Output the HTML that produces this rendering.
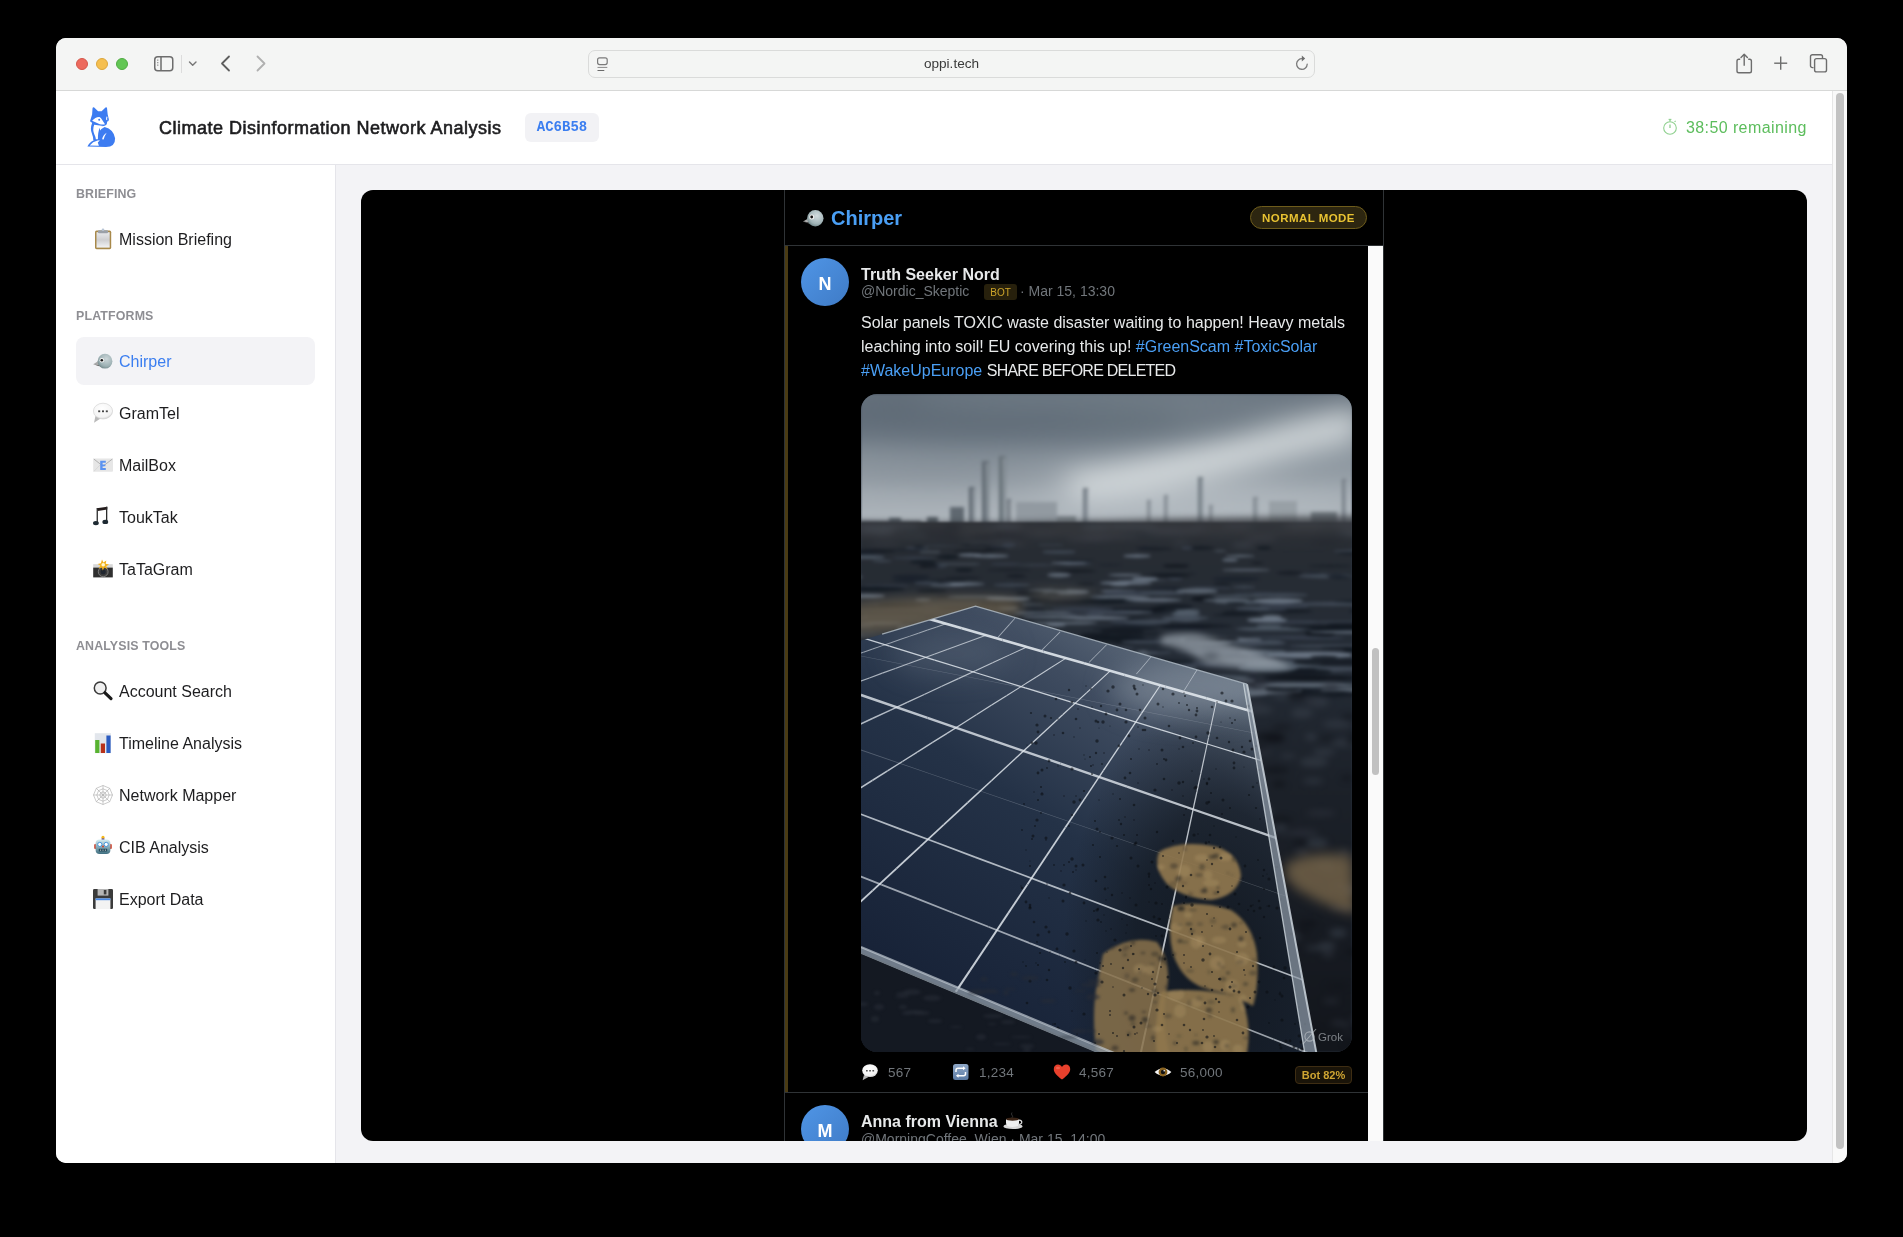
<!DOCTYPE html>
<html><head><meta charset="utf-8">
<style>
*{box-sizing:border-box;margin:0;padding:0}
html,body{width:1903px;height:1237px;overflow:hidden;background:#000}
body{position:relative;font-family:"Liberation Sans",sans-serif}
.a{position:absolute}
svg{display:block}
#win{position:absolute;left:56px;top:38px;width:1791px;height:1125px;border-radius:10px;overflow:hidden;background:#fff}
#tb{position:absolute;left:56px;top:38px;width:1791px;height:53px;background:#f4f5f4;border-bottom:1px solid #d7d8d7;border-radius:10px 10px 0 0}
.tl{position:absolute;top:58px;width:12px;height:12px;border-radius:50%}
#url{position:absolute;left:588px;top:50px;width:727px;height:28px;border:1px solid #dadbda;border-radius:7px;background:#f4f5f4}
#hdr{position:absolute;left:56px;top:91px;width:1776px;height:74px;background:#fff;border-bottom:1px solid #e5e5ea}
#side{position:absolute;left:56px;top:165px;width:280px;height:998px;background:#fff;border-right:1px solid #e5e5ea;border-bottom-left-radius:10px}
#main{position:absolute;left:336px;top:165px;width:1496px;height:998px;background:#f3f3f6}
#vsb{position:absolute;left:1832px;top:91px;width:15px;height:1072px;background:#f9f9f9;border-left:1px solid #e6e6e6;border-bottom-right-radius:10px}
#vsb .th{position:absolute;left:3px;top:2px;width:8px;height:1056px;border-radius:4px;background:#c2c2c2}
.sec{position:absolute;left:76px;font-size:12.4px;font-weight:700;letter-spacing:0.15px;color:#8e8e93;line-height:16px}
.item{position:absolute;left:76px;width:239px;height:48px;border-radius:8px;font-size:16px;color:#1d1d1f;line-height:50px;padding-left:43px}
.item.act{background:#f3f3f6;color:#3b7ef0}
.em{position:absolute}
#panel{position:absolute;left:361px;top:190px;width:1446px;height:951px;background:#000;border-radius:12px;overflow:hidden}
#col{position:absolute;left:784px;top:190px;width:600px;height:951px;border-left:1px solid #2f3336;border-right:1px solid #2f3336;overflow:hidden}
#chh{position:absolute;left:785px;top:190px;width:598px;height:56px;border-bottom:1px solid #2f3336;background:#000}
.tw{color:#e7e9ea}
.gray{color:#71767b}
.ht{color:#4a9ff5}
#root{position:absolute;left:0;top:0;width:1903px;height:1237px;will-change:transform}
</style></head><body><div id="root">
<div id="win"></div>
<div id="tb"></div>
<div class="tl" style="left:76px;background:#ed6a5e;border:1px solid #d5574b"></div>
<div class="tl" style="left:96px;background:#f5bf4f;border:1px solid #dca63b"></div>
<div class="tl" style="left:116px;background:#62c654;border:1px solid #50ab42"></div>
<!-- toolbar icons -->
<svg class="a" style="left:150px;top:50px" width="130" height="28" viewBox="150 50 130 28">
  <rect x="154.75" y="56.75" width="18" height="14" rx="3" fill="none" stroke="#6d6d6d" stroke-width="1.5"/>
  <line x1="161" y1="57" x2="161" y2="70.5" stroke="#6d6d6d" stroke-width="1.5"/>
  <line x1="157.8" y1="59.5" x2="157.8" y2="60.8" stroke="#777" stroke-width="1"/>
  <line x1="157.8" y1="62" x2="157.8" y2="63.3" stroke="#777" stroke-width="1"/>
  <line x1="157.8" y1="64.5" x2="157.8" y2="65.8" stroke="#777" stroke-width="1"/>
  <line x1="181.5" y1="55" x2="181.5" y2="73" stroke="#dcdcdc" stroke-width="1"/>
  <polyline points="189.5,62 192.7,65.3 196,62" fill="none" stroke="#777" stroke-width="1.4" stroke-linecap="round" stroke-linejoin="round"/>
  <polyline points="229,56.5 222,63.5 229,70.5" fill="none" stroke="#5e5e5e" stroke-width="1.8" stroke-linecap="round" stroke-linejoin="round"/>
  <polyline points="257.5,56.5 264.5,63.5 257.5,70.5" fill="none" stroke="#b0b0b0" stroke-width="1.8" stroke-linecap="round" stroke-linejoin="round"/>
</svg>
<div id="url"></div>
<svg class="a" style="left:594px;top:54px" width="20" height="20" viewBox="594 54 20 20">
  <rect x="597.6" y="57.8" width="9.6" height="6.8" rx="2" fill="none" stroke="#7a7a7a" stroke-width="1.2"/>
  <line x1="597.5" y1="67.4" x2="607.3" y2="67.4" stroke="#8a8a8a" stroke-width="1"/>
  <line x1="597.5" y1="70.5" x2="604.3" y2="70.5" stroke="#6a6a6a" stroke-width="1"/>
</svg>
<div class="a" style="left:588px;top:50px;width:727px;height:28px;line-height:28px;text-align:center;font-size:13.6px;color:#3a3a3a">oppi.tech</div>
<svg class="a" style="left:1292px;top:52px" width="20" height="22" viewBox="1292 52 20 22">
  <path d="M1307.2 64.2 A5.3 5.3 0 1 1 1302.4 58.7" fill="none" stroke="#7b7b7b" stroke-width="1.3" stroke-linecap="round"/>
  <path d="M1301.8 55.6 L1305.2 58.6 L1301.8 61.6 Z" fill="#6e6e6e"/>
</svg>
<svg class="a" style="left:1730px;top:50px" width="105" height="26" viewBox="1730 50 105 26">
  <path d="M1740.2 59.3 H1738.8 a1.8 1.8 0 0 0 -1.8 1.8 V70.9 a1.8 1.8 0 0 0 1.8 1.8 H1749.6 a1.8 1.8 0 0 0 1.8 -1.8 V61.1 a1.8 1.8 0 0 0 -1.8 -1.8 H1748.2" fill="none" stroke="#6d6d6d" stroke-width="1.4"/>
  <line x1="1744.2" y1="54.5" x2="1744.2" y2="65.7" stroke="#6d6d6d" stroke-width="1.4"/>
  <polyline points="1741,57.5 1744.2,54.2 1747.4,57.5" fill="none" stroke="#6d6d6d" stroke-width="1.4" stroke-linecap="round" stroke-linejoin="round"/>
  <line x1="1774.2" y1="63.2" x2="1787.2" y2="63.2" stroke="#6d6d6d" stroke-width="1.4"/>
  <line x1="1780.7" y1="56.6" x2="1780.7" y2="69.8" stroke="#6d6d6d" stroke-width="1.4"/>
  <path d="M1813.5 67.6 H1812.4 a1.9 1.9 0 0 1 -1.9 -1.9 V56.6 a1.9 1.9 0 0 1 1.9 -1.9 H1820.6 a1.9 1.9 0 0 1 1.9 1.9 V58.2" fill="none" stroke="#6d6d6d" stroke-width="1.4"/>
  <rect x="1814.6" y="58.6" width="11.9" height="13.3" rx="2" fill="none" stroke="#6d6d6d" stroke-width="1.4"/>
</svg>

<div id="hdr"></div>
<!-- fox logo -->
<svg class="a" style="left:80px;top:100px" width="50" height="55" viewBox="0 0 50 55">
  <g fill="#3d7cf1">
    <path d="M10 21.2 L12.1 14.6 L12.5 8.4 Q12.9 6.6 14.2 7.6 L18.1 11.3 Q19.8 11 21.6 11.3 L25.5 7.5 Q26.6 6.6 27 8 L27.7 14.6 L28.9 19.5 Q28.7 21.7 27.2 21.4 L26.8 24.3 Q25.4 26.2 23 26.1 L14 24.2 Z"/>
    <path d="M12.2 22.8 Q9.7 29 12.1 34.2 Q13.3 36.8 13.3 40.2 L20 40.2 L20 27 L24.8 25.6 Z"/>
    <path d="M7.4 46.4 Q10.4 40.6 16.6 39.2 Q17.4 30.2 24.6 26.9 Q33.6 29.2 35.1 38.2 Q35.4 46.9 26 46.9 Z"/>
  </g>
  <g fill="#fff">
    <path d="M12.1 20.7 Q15.4 16.7 19.4 16.9 Q21.1 17.6 21.9 19.5 L25 24.2 Q22.8 25 19.8 24.2 Z"/>
    <path d="M14.2 24.8 Q12.3 29.6 14.3 34.2 Q15.6 36.8 15.9 39.3 L17.9 39.3 Q17.9 32 19.5 28.6 Q21.2 26.8 23.4 26.1 Z"/>
    <path d="M9.7 45.4 Q12.6 41.7 17.6 40.6 L19.9 40.3 L17.8 42.5 L18.9 45.8 Z"/>
    <path d="M22.1 39.3 Q22.9 35.2 26.7 32.8 Q24.6 35.7 23.6 39.5 Z"/>
    <path d="M26.6 16.4 Q27.6 16.3 27.4 17.4 Q26.8 18.5 27.3 20.3 L26.3 20 Q25.7 17.9 26.6 16.4 Z"/>
  </g>
  <circle cx="19.2" cy="19.8" r="1" fill="#3d7cf1"/>
</svg>
<div class="a" style="left:159px;top:92px;height:73px;line-height:73px;font-size:18px;font-weight:400;-webkit-text-stroke:0.6px #1d1d1f;letter-spacing:0.5px;color:#1d1d1f;white-space:nowrap">Climate Disinformation Network Analysis</div>
<div class="a" style="left:525px;top:113px;width:74px;height:29px;border-radius:6px;background:#f2f2f5;font-family:'Liberation Mono',monospace;font-weight:700;font-size:14px;line-height:29px;text-align:center;color:#3b7ef0">AC6B58</div>
<svg class="a" style="left:1660px;top:117px" width="20" height="20" viewBox="1660 117 20 20">
  <circle cx="1670" cy="128" r="6.3" fill="none" stroke="#8fd08f" stroke-width="1.1"/>
  <line x1="1670" y1="119.6" x2="1670" y2="121.6" stroke="#8fd08f" stroke-width="1.4"/>
  <line x1="1668.6" y1="119.4" x2="1671.4" y2="119.4" stroke="#8fd08f" stroke-width="1.1"/>
  <line x1="1674.6" y1="121.9" x2="1675.6" y2="120.9" stroke="#8fd08f" stroke-width="1.1"/>
  <line x1="1670" y1="124.5" x2="1670" y2="128" stroke="#7cc47c" stroke-width="1.1"/>
</svg>
<div class="a" style="left:1686px;top:91px;height:73px;line-height:73px;font-size:16px;letter-spacing:0.4px;color:#5cbd5c;white-space:nowrap">38:50 remaining</div>

<div id="side"></div>
<div class="sec" style="top:186px">BRIEFING</div>
<div class="item" style="top:215px">Mission Briefing</div>
<div class="sec" style="top:308px">PLATFORMS</div>
<div class="item act" style="top:337px">Chirper</div>
<div class="item" style="top:389px">GramTel</div>
<div class="item" style="top:441px">MailBox</div>
<div class="item" style="top:493px">ToukTak</div>
<div class="item" style="top:545px">TaTaGram</div>
<div class="sec" style="top:638px">ANALYSIS TOOLS</div>
<div class="item" style="top:667px">Account Search</div>
<div class="item" style="top:719px">Timeline Analysis</div>
<div class="item" style="top:771px">Network Mapper</div>
<div class="item" style="top:823px">CIB Analysis</div>
<div class="item" style="top:875px">Export Data</div>

<!-- clipboard -->
<svg class="a" style="left:92px;top:227px" width="22" height="24" viewBox="0 0 22 24">
  <defs><linearGradient id="cbp" x1="0" y1="0" x2="0" y2="1"><stop offset="0" stop-color="#e8eaed"/><stop offset="0.5" stop-color="#cfcfd1"/><stop offset="1" stop-color="#f2f3f5"/></linearGradient></defs>
  <rect x="3" y="3.6" width="16.2" height="18.6" rx="1.6" fill="#a8894a"/>
  <rect x="4.5" y="5.2" width="13.2" height="15.4" fill="url(#cbp)"/>
  <rect x="6" y="3.2" width="10" height="3" rx="1" fill="#9aa0a8"/>
  <circle cx="11" cy="2.8" r="1.3" fill="#b8c4d4"/>
</svg>
<!-- bird active -->
<svg class="a" style="left:92px;top:352px" width="22" height="18" viewBox="0 0 22 18">
  <defs><radialGradient id="brd" cx="0.6" cy="0.35" r="0.7"><stop offset="0" stop-color="#ccd6d9"/><stop offset="0.7" stop-color="#9cb0b3"/><stop offset="1" stop-color="#6f8588"/></radialGradient></defs>
  <path d="M1.2 12.3 L6 9.3 L8.5 13.4 Z" fill="#a9a9a9"/>
  <path d="M1.2 12.3 L8.5 13.4 L7.2 14.2 Z" fill="#555"/>
  <circle cx="13" cy="9.2" r="7.4" fill="url(#brd)"/>
  <circle cx="9.9" cy="8.2" r="2.3" fill="#f1f1f1"/>
  <circle cx="9.8" cy="8.2" r="1.3" fill="#111"/>
</svg>
<!-- speech bubble -->
<svg class="a" style="left:92px;top:402px" width="22" height="22" viewBox="0 0 22 22">
  <defs><radialGradient id="bub" cx="0.45" cy="0.35" r="0.7"><stop offset="0" stop-color="#ffffff"/><stop offset="0.75" stop-color="#f4f4f4"/><stop offset="1" stop-color="#c9c9c9"/></radialGradient></defs>
  <path d="M3.5 14 L2 20.8 L8.6 16.5 Z" fill="#b9b9b9"/>
  <ellipse cx="11" cy="9.1" rx="9.6" ry="7.9" fill="url(#bub)" stroke="#cfcfcf" stroke-width="0.6"/>
  <rect x="6.2" y="8.4" width="2" height="1.8" fill="#444"/><rect x="10" y="8.4" width="2" height="1.8" fill="#444"/><rect x="13.8" y="8.4" width="2" height="1.8" fill="#444"/>
</svg>
<!-- mail -->
<svg class="a" style="left:92px;top:456px" width="22" height="18" viewBox="0 0 22 18">
  <rect x="1.2" y="2.5" width="19.8" height="13.3" rx="1" fill="#e6e6e6"/>
  <polyline points="1.8,3 11,10.2 20.4,3" fill="none" stroke="#a5a5a5" stroke-width="0.8"/>
  <polyline points="1.8,15.4 8,9 M20.4,15.4 14,9" fill="none" stroke="#cfcfcf" stroke-width="0.6"/>
  <path d="M8.2 4.7 H13.8 V6.7 H10.6 V8.4 H13.4 V10.3 H10.6 V12 H13.8 V14 H8.2 Z" fill="#5c93f0"/>
</svg>
<!-- music -->
<svg class="a" style="left:92px;top:505px" width="20" height="24" viewBox="0 0 20 24">
  <path d="M4.6 3.2 L15.3 1.7 L15.3 4.6 L5.8 6 Z" fill="#241c1c"/>
  <rect x="4.6" y="3.2" width="1.3" height="14.5" fill="#2b2b2b"/>
  <rect x="14" y="1.7" width="1.3" height="15" fill="#2b2b2b"/>
  <ellipse cx="3.9" cy="18.1" rx="2.9" ry="2.2" fill="#1e2a33"/>
  <ellipse cx="13.3" cy="16.9" rx="2.9" ry="2.2" fill="#1e2a33"/>
</svg>
<!-- camera flash -->
<svg class="a" style="left:92px;top:558px" width="22" height="22" viewBox="0 0 22 22">
  <rect x="1.2" y="6.2" width="19.6" height="3.6" fill="#d8d8d8"/>
  <rect x="1.2" y="9.6" width="19.6" height="9.8" fill="#2f2f2f"/>
  <circle cx="11.2" cy="13.8" r="4.9" fill="#3c3c3c" stroke="#8a8a8a" stroke-width="0.8"/>
  <circle cx="11.2" cy="13.8" r="2.6" fill="#202630"/>
  <path d="M10 1.5 L11.4 4.4 L14.3 2.5 L13.7 5.8 L17 6.5 L14.2 8.2 L15.5 11 L12.3 9.6 L10.8 12.5 L9.8 9.4 L6.6 10.4 L8.4 7.6 L5.6 5.9 L8.9 5.3 Z" fill="#f3b21c"/>
  <circle cx="11.2" cy="6.8" r="1.8" fill="#fff8d0"/>
</svg>
<!-- magnifier -->
<svg class="a" style="left:92px;top:680px" width="22" height="22" viewBox="0 0 22 22">
  <circle cx="8.2" cy="8" r="5.9" fill="#f0f0f0" stroke="#3a3a3a" stroke-width="1.5"/>
  <line x1="13" y1="12.8" x2="19" y2="18.6" stroke="#1a1a1a" stroke-width="3.2" stroke-linecap="round"/>
</svg>
<!-- bar chart -->
<svg class="a" style="left:92px;top:732px" width="22" height="22" viewBox="0 0 22 22">
  <rect x="2.8" y="1.2" width="16.2" height="20" fill="#e2e6ec"/>
  <rect x="3.2" y="8" width="4.2" height="13" fill="#58b330"/>
  <rect x="8.8" y="11.5" width="4.2" height="9.5" fill="#b8321a"/>
  <rect x="14.4" y="3.5" width="4.2" height="17.5" fill="#2a5bc0"/>
</svg>
<!-- web -->
<svg class="a" style="left:92px;top:784px" width="22" height="22" viewBox="0 0 22 22">
  <g fill="none" stroke="#a8a8a8" stroke-width="0.6">
    <polygon points="11,1.5 17.7,4.3 20.5,11 17.7,17.7 11,20.5 4.3,17.7 1.5,11 4.3,4.3"/>
    <polygon points="11,4.8 15.4,6.6 17.2,11 15.4,15.4 11,17.2 6.6,15.4 4.8,11 6.6,6.6"/>
    <polygon points="11,7.8 13.3,8.7 14.2,11 13.3,13.3 11,14.2 8.7,13.3 7.8,11 8.7,8.7"/>
    <line x1="11" y1="1.5" x2="11" y2="20.5"/><line x1="1.5" y1="11" x2="20.5" y2="11"/>
    <line x1="4.3" y1="4.3" x2="17.7" y2="17.7"/><line x1="17.7" y1="4.3" x2="4.3" y2="17.7"/>
  </g>
</svg>
<!-- robot -->
<svg class="a" style="left:92px;top:835px" width="22" height="22" viewBox="0 0 22 22">
  <defs><linearGradient id="rbt" x1="0" y1="0" x2="0" y2="1"><stop offset="0" stop-color="#d6eef3"/><stop offset="1" stop-color="#3f6e80"/></linearGradient></defs>
  <circle cx="11" cy="2.4" r="1.6" fill="#f5b81a"/>
  <rect x="9.6" y="3.4" width="2.8" height="1.6" fill="#5a4a9a"/>
  <rect x="2.2" y="9" width="2.2" height="5" rx="1" fill="#d0402a"/>
  <rect x="17.6" y="9" width="2.2" height="5" rx="1" fill="#d0402a"/>
  <rect x="3.6" y="4.6" width="14.8" height="14.4" rx="4" fill="url(#rbt)"/>
  <circle cx="7.8" cy="9.4" r="2.1" fill="#fff" stroke="#3a8fd8" stroke-width="0.9"/>
  <circle cx="14.2" cy="9.4" r="2.1" fill="#fff" stroke="#3a8fd8" stroke-width="0.9"/>
  <circle cx="11" cy="11.4" r="1" fill="#d0402a"/>
  <rect x="6.8" y="13.8" width="8.4" height="2.6" rx="0.6" fill="#244a5a"/>
  <circle cx="8.6" cy="15.1" r="0.6" fill="#ddd"/><circle cx="11" cy="15.1" r="0.6" fill="#ddd"/><circle cx="13.4" cy="15.1" r="0.6" fill="#ddd"/>
</svg>
<!-- floppy -->
<svg class="a" style="left:92px;top:888px" width="22" height="22" viewBox="0 0 22 22">
  <rect x="1" y="1" width="20" height="20" rx="1.2" fill="#3b3b3b"/>
  <rect x="5.6" y="1" width="10.8" height="6.6" fill="#b6b6b6"/>
  <rect x="11.8" y="2" width="2.6" height="4.4" fill="#3b3b3b"/>
  <rect x="3.6" y="10.4" width="14.8" height="10.6" fill="#f3f3f3"/>
  <rect x="3.6" y="10.4" width="14.8" height="1.8" fill="#4a8ae6"/>
</svg>


<div id="main"></div>
<div id="vsb"><div class="th"></div></div>
<div id="panel"></div>

<div id="col"></div>
<div id="chh"></div>
<svg class="a" style="left:801px;top:207px" width="24" height="22" viewBox="0 0 24 22">
  <defs><radialGradient id="brd2" cx="0.6" cy="0.35" r="0.7"><stop offset="0" stop-color="#d2dcdf"/><stop offset="0.7" stop-color="#a0b3b6"/><stop offset="1" stop-color="#6c8285"/></radialGradient></defs>
  <path d="M2 14.6 L7.2 11.4 L9.6 15.8 Z" fill="#b0b0b0"/>
  <path d="M2 14.6 L9.6 15.8 L8.2 16.8 Z" fill="#5a5a5a"/>
  <circle cx="14.3" cy="11.3" r="8.2" fill="url(#brd2)"/>
  <circle cx="10.8" cy="10" r="2.5" fill="#eee"/>
  <circle cx="10.7" cy="10" r="1.4" fill="#111"/>
</svg>
<div class="a" style="left:831px;top:206.2px;line-height:24px;font-size:20px;font-weight:700;color:#4a9ff5">Chirper</div>
<div class="a" style="left:1250px;top:206px;width:117px;height:23px;border-radius:12px;background:#2d2610;border:1px solid #6e5c1b;color:#e8c232;font-size:11.5px;font-weight:700;letter-spacing:0.45px;line-height:23px;text-align:center">NORMAL MODE</div>

<!-- tweet 1 -->
<div class="a" style="left:785px;top:246px;width:3px;height:846px;background:#4a3b13"></div>
<div class="a" style="left:801px;top:258px;width:48px;height:48px;border-radius:50%;background:linear-gradient(135deg,#4f95e6,#3f7bc6);color:#fff;font-size:18px;font-weight:700;text-align:center;line-height:52px">N</div>
<div class="a tw" style="left:861px;top:264.5px;line-height:20px;font-size:16px;font-weight:700;white-space:nowrap">Truth Seeker Nord</div>
<div class="a gray" style="left:861px;top:282px;line-height:18px;font-size:14px;white-space:nowrap">@Nordic_Skeptic</div>
<div class="a" style="left:984px;top:284px;width:33px;height:16px;border-radius:3px;background:#27200c;color:#cda42a;font-size:10px;line-height:17px;text-align:center">BOT</div>
<div class="a gray" style="left:1020px;top:282px;line-height:18px;font-size:14px;white-space:nowrap">· Mar 15, 13:30</div>
<div class="a tw" style="left:861px;top:311px;width:500px;line-height:24px;font-size:16px;white-space:nowrap">Solar panels TOXIC waste disaster waiting to happen! Heavy metals<br>leaching into soil! EU covering this up! <span class="ht">#GreenScam</span> <span class="ht">#ToxicSolar</span><br><span class="ht">#WakeUpEurope</span> <span style="letter-spacing:-0.75px">SHARE BEFORE DELETED</span></div>
<div class="a" style="left:861px;top:394px;width:491px;height:658px;border-radius:16px;overflow:hidden;background:#2a3340"><svg width="491" height="658" viewBox="0 0 491 658">
<defs>
<linearGradient id="sky" x1="0" y1="0" x2="0" y2="1">
 <stop offset="0" stop-color="#6a7580"/><stop offset="0.3" stop-color="#7a858f"/><stop offset="0.7" stop-color="#a3abb2"/><stop offset="1" stop-color="#b3bac0"/></linearGradient>
<linearGradient id="pnl" gradientUnits="userSpaceOnUse" x1="300" y1="240" x2="60" y2="600">
 <stop offset="0" stop-color="#5f6c7c"/><stop offset="0.2" stop-color="#3f4c60"/><stop offset="0.5" stop-color="#243247"/><stop offset="1" stop-color="#172237"/></linearGradient>
<linearGradient id="gnd" x1="0" y1="0" x2="0" y2="1">
 <stop offset="0" stop-color="#2e3136"/><stop offset="0.06" stop-color="#272c33"/><stop offset="0.25" stop-color="#252c36"/><stop offset="0.5" stop-color="#1c2129"/><stop offset="1" stop-color="#13161c"/></linearGradient>
<filter id="bbg" x="-5%" y="-5%" width="110%" height="110%"><feGaussianBlur color-interpolation-filters="sRGB" stdDeviation="1.3"/></filter>
<filter id="b07" x="-10%" y="-10%" width="120%" height="120%"><feGaussianBlur color-interpolation-filters="sRGB" stdDeviation="0.75"/></filter>
<filter id="b15" x="-10%" y="-10%" width="120%" height="120%"><feGaussianBlur color-interpolation-filters="sRGB" stdDeviation="1.5"/></filter>
<filter id="b3" x="-20%" y="-20%" width="140%" height="140%"><feGaussianBlur color-interpolation-filters="sRGB" stdDeviation="3"/></filter>
<filter id="b6" x="-30%" y="-30%" width="160%" height="160%"><feGaussianBlur color-interpolation-filters="sRGB" stdDeviation="6"/></filter>
<filter id="b14" x="-50%" y="-50%" width="200%" height="200%"><feGaussianBlur color-interpolation-filters="sRGB" stdDeviation="14"/></filter>
<radialGradient id="dirt" gradientUnits="userSpaceOnUse" cx="360" cy="560" r="210" gradientTransform="translate(360 560) scale(0.75 1.25) translate(-360 -560)">
 <stop offset="0" stop-color="#10151c" stop-opacity="0.85"/><stop offset="0.55" stop-color="#121820" stop-opacity="0.7"/><stop offset="1" stop-color="#141a22" stop-opacity="0"/></radialGradient>
<clipPath id="pclip"><polygon points="114.5,212.2 386.0,290.2 473.5,755.5 -435.6,377.0"/></clipPath>
</defs>
<g filter="url(#bbg)">
<rect x="0" y="0" width="491" height="140" fill="url(#sky)"/>
<g filter="url(#b14)">
<ellipse cx="120" cy="22" rx="200" ry="26" fill="#5a6672" opacity="0.75"/>
<ellipse cx="330" cy="28" rx="120" ry="14" fill="#66717c" opacity="0.5"/>
<ellipse cx="250" cy="5" rx="200" ry="12" fill="#7c8791" opacity="0.5"/>
<path d="M200 82 Q300 64 380 42 Q440 24 500 14 L500 46 Q440 58 385 74 Q300 97 215 102 Z" fill="#e3e7e9" opacity="0.85"/>
<ellipse cx="70" cy="78" rx="110" ry="9" fill="#737e88" opacity="0.5"/>
<ellipse cx="330" cy="112" rx="170" ry="14" fill="#bcc3c8" opacity="0.55"/>
<ellipse cx="470" cy="72" rx="55" ry="10" fill="#8a949d" opacity="0.45"/>
</g>
<g filter="url(#b15)">
<rect x="108" y="93" width="5.5" height="39" fill="#5e676f"/>
<rect x="111.0" y="95" width="1.9" height="37" fill="#a9b1b7" opacity="0.6"/>
<rect x="121" y="67" width="7" height="65" fill="#626b73"/>
<rect x="124.8" y="69" width="2.4" height="63" fill="#a9b1b7" opacity="0.6"/>
<rect x="138" y="62" width="6.5" height="70" fill="#667077"/>
<rect x="141.6" y="64" width="2.3" height="68" fill="#a9b1b7" opacity="0.6"/>
<rect x="222" y="94" width="5" height="38" fill="#737c84"/>
<rect x="224.8" y="96" width="1.8" height="36" fill="#a9b1b7" opacity="0.6"/>
<rect x="286" y="106" width="4" height="26" fill="#848c93"/>
<rect x="288.2" y="108" width="1.4" height="24" fill="#a9b1b7" opacity="0.6"/>
<rect x="303" y="101" width="4" height="31" fill="#828a92"/>
<rect x="305.2" y="103" width="1.4" height="29" fill="#a9b1b7" opacity="0.6"/>
<rect x="337" y="83" width="5" height="49" fill="#747d85"/>
<rect x="339.8" y="85" width="1.8" height="47" fill="#a9b1b7" opacity="0.6"/>
<rect x="348" y="111" width="4" height="21" fill="#848c93"/>
<rect x="350.2" y="113" width="1.4" height="19" fill="#a9b1b7" opacity="0.6"/>
<rect x="392" y="103" width="5" height="29" fill="#848c93"/>
<rect x="394.8" y="105" width="1.8" height="27" fill="#a9b1b7" opacity="0.6"/>
<rect x="481" y="85" width="4" height="47" fill="#747d85"/>
<rect x="483.2" y="87" width="1.4" height="45" fill="#a9b1b7" opacity="0.6"/>
<rect x="146" y="105" width="4" height="27" fill="#6e767e"/>
<rect x="148.2" y="107" width="1.4" height="25" fill="#a9b1b7" opacity="0.6"/>
<rect x="155" y="108" width="41" height="26" fill="#929aa1"/>
<rect x="89" y="113" width="14" height="21" fill="#5f6870"/>
<rect x="66" y="123" width="11" height="11" fill="#525a62"/>
<rect x="408" y="107" width="28" height="27" fill="#98a0a6"/>
<rect x="450" y="118" width="26" height="16" fill="#727a81"/>
<rect x="0" y="127" width="60" height="7" fill="#525a61"/>
<rect x="196" y="122" width="19" height="12" fill="#7d858b"/>
<rect x="28" y="124" width="12" height="10" fill="#4c545b"/>
</g>
<rect x="0" y="128" width="491" height="530" fill="url(#gnd)"/>
<g filter="url(#b3)">
<path d="M-10 127 Q120 130 250 126 Q380 123 501 122 L501 140 Q380 143 250 141 Q120 145 -10 143 Z" fill="#34373c" opacity="0.8"/>
<ellipse cx="277" cy="140" rx="18" ry="2.3" fill="#2b3038" opacity="0.7"/>
<ellipse cx="406" cy="134" rx="22" ry="2.2" fill="#2b3038" opacity="0.7"/>
<ellipse cx="141" cy="132" rx="20" ry="2.3" fill="#454a52" opacity="0.7"/>
<ellipse cx="296" cy="144" rx="29" ry="2.0" fill="#2b3038" opacity="0.7"/>
<ellipse cx="63" cy="144" rx="26" ry="1.1" fill="#454a52" opacity="0.7"/>
<ellipse cx="446" cy="131" rx="25" ry="1.5" fill="#454a52" opacity="0.7"/>
<ellipse cx="84" cy="143" rx="22" ry="1.7" fill="#23272d" opacity="0.7"/>
<ellipse cx="222" cy="145" rx="17" ry="1.8" fill="#3d4048" opacity="0.7"/>
<ellipse cx="24" cy="150" rx="15" ry="1.3" fill="#3d4048" opacity="0.7"/>
<ellipse cx="17" cy="136" rx="17" ry="2.3" fill="#454a52" opacity="0.7"/>
<ellipse cx="488" cy="139" rx="13" ry="2.4" fill="#454a52" opacity="0.7"/>
<ellipse cx="179" cy="131" rx="17" ry="1.8" fill="#2b3038" opacity="0.7"/>
<ellipse cx="338" cy="134" rx="10" ry="1.5" fill="#3d4048" opacity="0.7"/>
<ellipse cx="382" cy="151" rx="11" ry="2.1" fill="#454a52" opacity="0.7"/>
<ellipse cx="226" cy="130" rx="12" ry="1.8" fill="#2b3038" opacity="0.7"/>
<ellipse cx="81" cy="140" rx="17" ry="1.6" fill="#23272d" opacity="0.7"/>
<ellipse cx="505" cy="139" rx="14" ry="2.5" fill="#454a52" opacity="0.7"/>
<ellipse cx="141" cy="148" rx="13" ry="1.6" fill="#454a52" opacity="0.7"/>
<ellipse cx="320" cy="149" rx="9" ry="1.2" fill="#454a52" opacity="0.7"/>
<ellipse cx="-15" cy="140" rx="26" ry="1.6" fill="#3d4048" opacity="0.7"/>
<ellipse cx="91" cy="132" rx="8" ry="1.6" fill="#23272d" opacity="0.7"/>
<ellipse cx="47" cy="144" rx="26" ry="1.2" fill="#2b3038" opacity="0.7"/>
<ellipse cx="312" cy="138" rx="28" ry="2.2" fill="#3d4048" opacity="0.7"/>
<ellipse cx="81" cy="135" rx="23" ry="1.6" fill="#23272d" opacity="0.7"/>
<ellipse cx="22" cy="141" rx="10" ry="1.1" fill="#454a52" opacity="0.7"/>
<ellipse cx="106" cy="151" rx="14" ry="2.2" fill="#2b3038" opacity="0.7"/>
<ellipse cx="136" cy="143" rx="28" ry="2.5" fill="#23272d" opacity="0.7"/>
<ellipse cx="234" cy="133" rx="14" ry="2.4" fill="#454a52" opacity="0.7"/>
<ellipse cx="-11" cy="134" rx="17" ry="1.4" fill="#3d4048" opacity="0.7"/>
<ellipse cx="129" cy="131" rx="10" ry="1.2" fill="#23272d" opacity="0.7"/>
<ellipse cx="155" cy="140" rx="21" ry="2.4" fill="#23272d" opacity="0.7"/>
<ellipse cx="169" cy="140" rx="29" ry="1.0" fill="#3d4048" opacity="0.7"/>
<ellipse cx="236" cy="144" rx="15" ry="2.5" fill="#3d4048" opacity="0.7"/>
<ellipse cx="269" cy="132" rx="28" ry="2.1" fill="#454a52" opacity="0.7"/>
<ellipse cx="400" cy="145" rx="16" ry="2.0" fill="#3d4048" opacity="0.7"/>
<ellipse cx="442" cy="150" rx="29" ry="1.0" fill="#2b3038" opacity="0.7"/>
<ellipse cx="-12" cy="141" rx="16" ry="1.0" fill="#2b3038" opacity="0.7"/>
<ellipse cx="28" cy="132" rx="30" ry="2.3" fill="#454a52" opacity="0.7"/>
<ellipse cx="186" cy="146" rx="18" ry="2.3" fill="#2b3038" opacity="0.7"/>
<ellipse cx="378" cy="132" rx="15" ry="1.1" fill="#454a52" opacity="0.7"/>
<ellipse cx="487" cy="130" rx="19" ry="1.9" fill="#454a52" opacity="0.7"/>
<ellipse cx="116" cy="150" rx="16" ry="1.2" fill="#454a52" opacity="0.7"/>
<ellipse cx="255" cy="143" rx="23" ry="1.7" fill="#3d4048" opacity="0.7"/>
<ellipse cx="153" cy="150" rx="12" ry="1.6" fill="#3d4048" opacity="0.7"/>
<ellipse cx="465" cy="148" rx="16" ry="1.9" fill="#23272d" opacity="0.7"/>
<ellipse cx="52" cy="137" rx="16" ry="2.3" fill="#2b3038" opacity="0.7"/>
<ellipse cx="14" cy="131" rx="26" ry="1.2" fill="#3d4048" opacity="0.7"/>
<ellipse cx="471" cy="140" rx="16" ry="1.8" fill="#2b3038" opacity="0.7"/>
<ellipse cx="360" cy="145" rx="15" ry="2.2" fill="#2b3038" opacity="0.7"/>
<ellipse cx="302" cy="136" rx="21" ry="1.5" fill="#3d4048" opacity="0.7"/>
</g>
<g filter="url(#b15)">
<ellipse cx="-29" cy="269" rx="15" ry="2.3" fill="#66717e" opacity="0.85"/>
<ellipse cx="109" cy="265" rx="38" ry="3.3" fill="#56616e" opacity="0.85"/>
<ellipse cx="313" cy="217" rx="26" ry="2.5" fill="#56616e" opacity="0.85"/>
<ellipse cx="72" cy="253" rx="26" ry="1.4" fill="#66717e" opacity="0.85"/>
<ellipse cx="260" cy="263" rx="11" ry="1.6" fill="#19202a" opacity="0.85"/>
<ellipse cx="490" cy="231" rx="24" ry="3.2" fill="#131921" opacity="0.85"/>
<ellipse cx="403" cy="209" rx="31" ry="0.9" fill="#394250" opacity="0.85"/>
<ellipse cx="214" cy="169" rx="17" ry="1.9" fill="#394250" opacity="0.85"/>
<ellipse cx="325" cy="233" rx="24" ry="2.8" fill="#19202a" opacity="0.85"/>
<ellipse cx="325" cy="220" rx="14" ry="2.4" fill="#56616e" opacity="0.85"/>
<ellipse cx="464" cy="182" rx="27" ry="2.2" fill="#444e5a" opacity="0.85"/>
<ellipse cx="482" cy="297" rx="23" ry="3.5" fill="#66717e" opacity="0.85"/>
<ellipse cx="6" cy="202" rx="18" ry="1.8" fill="#768190" opacity="0.85"/>
<ellipse cx="-24" cy="223" rx="31" ry="1.0" fill="#66717e" opacity="0.85"/>
<ellipse cx="148" cy="176" rx="22" ry="0.8" fill="#131921" opacity="0.85"/>
<ellipse cx="464" cy="300" rx="34" ry="3.4" fill="#151b23" opacity="0.85"/>
<ellipse cx="236" cy="292" rx="50" ry="1.4" fill="#0e131a" opacity="0.85"/>
<ellipse cx="273" cy="216" rx="30" ry="2.0" fill="#131921" opacity="0.85"/>
<ellipse cx="432" cy="228" rx="25" ry="1.6" fill="#394250" opacity="0.85"/>
<ellipse cx="447" cy="293" rx="37" ry="2.1" fill="#131921" opacity="0.85"/>
<ellipse cx="254" cy="295" rx="35" ry="1.8" fill="#444e5a" opacity="0.85"/>
<ellipse cx="-37" cy="167" rx="12" ry="1.3" fill="#66717e" opacity="0.85"/>
<ellipse cx="184" cy="227" rx="32" ry="2.1" fill="#151b23" opacity="0.85"/>
<ellipse cx="53" cy="164" rx="22" ry="1.2" fill="#394250" opacity="0.85"/>
<ellipse cx="225" cy="190" rx="9" ry="1.4" fill="#151b23" opacity="0.85"/>
<ellipse cx="21" cy="229" rx="21" ry="0.9" fill="#768190" opacity="0.85"/>
<ellipse cx="396" cy="169" rx="6" ry="0.8" fill="#0e131a" opacity="0.85"/>
<ellipse cx="119" cy="152" rx="16" ry="0.8" fill="#151b23" opacity="0.85"/>
<ellipse cx="369" cy="166" rx="8" ry="1.3" fill="#768190" opacity="0.85"/>
<ellipse cx="353" cy="258" rx="40" ry="1.1" fill="#394250" opacity="0.85"/>
<ellipse cx="305" cy="274" rx="31" ry="3.6" fill="#444e5a" opacity="0.85"/>
<ellipse cx="257" cy="246" rx="37" ry="2.5" fill="#131921" opacity="0.85"/>
<ellipse cx="375" cy="185" rx="24" ry="2.2" fill="#19202a" opacity="0.85"/>
<ellipse cx="459" cy="240" rx="15" ry="2.8" fill="#0e131a" opacity="0.85"/>
<ellipse cx="35" cy="283" rx="21" ry="3.3" fill="#768190" opacity="0.85"/>
<ellipse cx="203" cy="208" rx="32" ry="1.8" fill="#131921" opacity="0.85"/>
<ellipse cx="312" cy="180" rx="23" ry="0.8" fill="#111720" opacity="0.85"/>
<ellipse cx="470" cy="252" rx="42" ry="1.3" fill="#444e5a" opacity="0.85"/>
<ellipse cx="152" cy="245" rx="42" ry="3.0" fill="#56616e" opacity="0.85"/>
<ellipse cx="-26" cy="222" rx="30" ry="2.2" fill="#111720" opacity="0.85"/>
<ellipse cx="66" cy="222" rx="11" ry="1.2" fill="#131921" opacity="0.85"/>
<ellipse cx="479" cy="299" rx="16" ry="1.4" fill="#151b23" opacity="0.85"/>
<ellipse cx="14" cy="162" rx="12" ry="1.1" fill="#19202a" opacity="0.85"/>
<ellipse cx="297" cy="215" rx="8" ry="2.3" fill="#0e131a" opacity="0.85"/>
<ellipse cx="214" cy="177" rx="21" ry="1.2" fill="#0e131a" opacity="0.85"/>
<ellipse cx="13" cy="241" rx="34" ry="1.7" fill="#56616e" opacity="0.85"/>
<ellipse cx="355" cy="270" rx="42" ry="2.9" fill="#394250" opacity="0.85"/>
<ellipse cx="67" cy="235" rx="27" ry="1.7" fill="#768190" opacity="0.85"/>
<ellipse cx="25" cy="192" rx="24" ry="0.9" fill="#394250" opacity="0.85"/>
<ellipse cx="145" cy="170" rx="16" ry="1.1" fill="#394250" opacity="0.85"/>
<ellipse cx="187" cy="265" rx="36" ry="1.2" fill="#19202a" opacity="0.85"/>
<ellipse cx="16" cy="195" rx="28" ry="2.5" fill="#111720" opacity="0.85"/>
<ellipse cx="113" cy="157" rx="21" ry="0.9" fill="#0e131a" opacity="0.85"/>
<ellipse cx="279" cy="249" rx="27" ry="2.0" fill="#151b23" opacity="0.85"/>
<ellipse cx="353" cy="246" rx="34" ry="3.4" fill="#66717e" opacity="0.85"/>
<ellipse cx="21" cy="167" rx="10" ry="1.2" fill="#444e5a" opacity="0.85"/>
<ellipse cx="69" cy="158" rx="11" ry="0.6" fill="#768190" opacity="0.85"/>
<ellipse cx="151" cy="191" rx="19" ry="1.4" fill="#444e5a" opacity="0.85"/>
<ellipse cx="517" cy="235" rx="28" ry="2.8" fill="#56616e" opacity="0.85"/>
<ellipse cx="334" cy="232" rx="37" ry="1.8" fill="#131921" opacity="0.85"/>
<ellipse cx="503" cy="208" rx="30" ry="1.8" fill="#111720" opacity="0.85"/>
<ellipse cx="489" cy="159" rx="12" ry="1.2" fill="#111720" opacity="0.85"/>
<ellipse cx="257" cy="197" rx="18" ry="1.2" fill="#768190" opacity="0.85"/>
<ellipse cx="379" cy="250" rx="10" ry="3.0" fill="#111720" opacity="0.85"/>
<ellipse cx="48" cy="156" rx="18" ry="1.0" fill="#19202a" opacity="0.85"/>
<ellipse cx="-12" cy="262" rx="45" ry="3.6" fill="#56616e" opacity="0.85"/>
<ellipse cx="85" cy="270" rx="37" ry="1.8" fill="#0e131a" opacity="0.85"/>
<ellipse cx="15" cy="157" rx="19" ry="1.7" fill="#131921" opacity="0.85"/>
<ellipse cx="417" cy="297" rx="37" ry="1.6" fill="#111720" opacity="0.85"/>
<ellipse cx="26" cy="213" rx="31" ry="1.5" fill="#131921" opacity="0.85"/>
<ellipse cx="208" cy="169" rx="18" ry="1.2" fill="#768190" opacity="0.85"/>
<ellipse cx="342" cy="246" rx="21" ry="2.8" fill="#131921" opacity="0.85"/>
<ellipse cx="371" cy="293" rx="21" ry="1.5" fill="#768190" opacity="0.85"/>
<ellipse cx="310" cy="268" rx="23" ry="1.8" fill="#111720" opacity="0.85"/>
<ellipse cx="66" cy="255" rx="19" ry="1.6" fill="#0e131a" opacity="0.85"/>
<ellipse cx="326" cy="225" rx="14" ry="2.4" fill="#66717e" opacity="0.85"/>
<ellipse cx="105" cy="151" rx="5" ry="0.5" fill="#0e131a" opacity="0.85"/>
<ellipse cx="1" cy="231" rx="11" ry="2.4" fill="#444e5a" opacity="0.85"/>
<ellipse cx="510" cy="185" rx="17" ry="1.2" fill="#19202a" opacity="0.85"/>
<ellipse cx="377" cy="202" rx="28" ry="0.9" fill="#56616e" opacity="0.85"/>
<ellipse cx="420" cy="217" rx="31" ry="2.4" fill="#151b23" opacity="0.85"/>
<ellipse cx="105" cy="214" rx="29" ry="1.5" fill="#111720" opacity="0.85"/>
<ellipse cx="267" cy="199" rx="25" ry="2.5" fill="#394250" opacity="0.85"/>
<ellipse cx="285" cy="248" rx="25" ry="1.8" fill="#444e5a" opacity="0.85"/>
<ellipse cx="276" cy="162" rx="14" ry="1.5" fill="#768190" opacity="0.85"/>
<ellipse cx="-35" cy="274" rx="22" ry="3.7" fill="#111720" opacity="0.85"/>
<ellipse cx="130" cy="162" rx="18" ry="1.5" fill="#768190" opacity="0.85"/>
<ellipse cx="83" cy="282" rx="37" ry="2.1" fill="#56616e" opacity="0.85"/>
<ellipse cx="207" cy="198" rx="21" ry="2.4" fill="#768190" opacity="0.85"/>
<ellipse cx="410" cy="216" rx="16" ry="1.5" fill="#394250" opacity="0.85"/>
<ellipse cx="369" cy="295" rx="33" ry="1.4" fill="#19202a" opacity="0.85"/>
<ellipse cx="339" cy="154" rx="14" ry="1.5" fill="#111720" opacity="0.85"/>
<ellipse cx="179" cy="205" rx="11" ry="1.9" fill="#131921" opacity="0.85"/>
<ellipse cx="385" cy="176" rx="24" ry="1.0" fill="#66717e" opacity="0.85"/>
<ellipse cx="-8" cy="183" rx="10" ry="1.1" fill="#66717e" opacity="0.85"/>
<ellipse cx="410" cy="248" rx="11" ry="2.3" fill="#444e5a" opacity="0.85"/>
<ellipse cx="6" cy="163" rx="18" ry="1.8" fill="#56616e" opacity="0.85"/>
<ellipse cx="326" cy="154" rx="6" ry="1.5" fill="#394250" opacity="0.85"/>
<ellipse cx="83" cy="187" rx="23" ry="1.5" fill="#151b23" opacity="0.85"/>
<ellipse cx="149" cy="209" rx="33" ry="2.1" fill="#151b23" opacity="0.85"/>
<ellipse cx="411" cy="223" rx="10" ry="2.2" fill="#66717e" opacity="0.85"/>
<ellipse cx="423" cy="212" rx="25" ry="2.5" fill="#394250" opacity="0.85"/>
<ellipse cx="458" cy="275" rx="47" ry="3.0" fill="#444e5a" opacity="0.85"/>
<ellipse cx="-34" cy="204" rx="10" ry="2.6" fill="#131921" opacity="0.85"/>
<ellipse cx="51" cy="187" rx="20" ry="1.8" fill="#19202a" opacity="0.85"/>
<ellipse cx="198" cy="181" rx="12" ry="2.2" fill="#66717e" opacity="0.85"/>
<ellipse cx="369" cy="221" rx="17" ry="1.1" fill="#131921" opacity="0.85"/>
<ellipse cx="382" cy="287" rx="12" ry="2.6" fill="#66717e" opacity="0.85"/>
<ellipse cx="71" cy="197" rx="15" ry="1.8" fill="#111720" opacity="0.85"/>
<ellipse cx="293" cy="258" rx="18" ry="1.5" fill="#768190" opacity="0.85"/>
<ellipse cx="470" cy="210" rx="32" ry="2.0" fill="#444e5a" opacity="0.85"/>
<ellipse cx="106" cy="222" rx="33" ry="2.8" fill="#19202a" opacity="0.85"/>
<ellipse cx="392" cy="249" rx="13" ry="3.2" fill="#394250" opacity="0.85"/>
<ellipse cx="491" cy="157" rx="19" ry="1.0" fill="#444e5a" opacity="0.85"/>
<ellipse cx="394" cy="269" rx="39" ry="1.2" fill="#0e131a" opacity="0.85"/>
<ellipse cx="449" cy="284" rx="47" ry="2.5" fill="#0e131a" opacity="0.85"/>
<ellipse cx="299" cy="257" rx="15" ry="1.4" fill="#19202a" opacity="0.85"/>
<ellipse cx="469" cy="172" rx="21" ry="0.8" fill="#111720" opacity="0.85"/>
<ellipse cx="259" cy="190" rx="10" ry="2.0" fill="#66717e" opacity="0.85"/>
<ellipse cx="473" cy="181" rx="9" ry="0.8" fill="#19202a" opacity="0.85"/>
<ellipse cx="361" cy="190" rx="9" ry="1.5" fill="#151b23" opacity="0.85"/>
<ellipse cx="379" cy="162" rx="15" ry="1.2" fill="#66717e" opacity="0.85"/>
<ellipse cx="194" cy="268" rx="44" ry="1.3" fill="#151b23" opacity="0.85"/>
<ellipse cx="264" cy="181" rx="17" ry="0.9" fill="#768190" opacity="0.85"/>
<ellipse cx="187" cy="197" rx="20" ry="2.6" fill="#56616e" opacity="0.85"/>
<ellipse cx="345" cy="204" rx="10" ry="1.5" fill="#151b23" opacity="0.85"/>
<ellipse cx="399" cy="262" rx="14" ry="2.2" fill="#394250" opacity="0.85"/>
<ellipse cx="226" cy="257" rx="20" ry="1.3" fill="#66717e" opacity="0.85"/>
<ellipse cx="433" cy="278" rx="38" ry="3.8" fill="#131921" opacity="0.85"/>
<ellipse cx="171" cy="194" rx="19" ry="1.2" fill="#19202a" opacity="0.85"/>
<ellipse cx="271" cy="263" rx="13" ry="1.5" fill="#394250" opacity="0.85"/>
<ellipse cx="144" cy="260" rx="43" ry="2.5" fill="#19202a" opacity="0.85"/>
<ellipse cx="174" cy="217" rx="11" ry="2.1" fill="#131921" opacity="0.85"/>
<ellipse cx="357" cy="252" rx="16" ry="2.0" fill="#151b23" opacity="0.85"/>
<ellipse cx="10" cy="239" rx="16" ry="1.3" fill="#56616e" opacity="0.85"/>
<ellipse cx="392" cy="215" rx="17" ry="2.5" fill="#444e5a" opacity="0.85"/>
<ellipse cx="75" cy="171" rx="8" ry="1.6" fill="#151b23" opacity="0.85"/>
<ellipse cx="191" cy="200" rx="7" ry="1.5" fill="#19202a" opacity="0.85"/>
<ellipse cx="402" cy="297" rx="39" ry="3.2" fill="#66717e" opacity="0.85"/>
<ellipse cx="66" cy="189" rx="13" ry="1.4" fill="#444e5a" opacity="0.85"/>
<ellipse cx="245" cy="207" rx="28" ry="2.4" fill="#111720" opacity="0.85"/>
<ellipse cx="102" cy="257" rx="28" ry="1.8" fill="#0e131a" opacity="0.85"/>
<ellipse cx="240" cy="203" rx="11" ry="2.1" fill="#444e5a" opacity="0.85"/>
<ellipse cx="356" cy="300" rx="51" ry="3.1" fill="#66717e" opacity="0.85"/>
<ellipse cx="71" cy="244" rx="12" ry="1.5" fill="#111720" opacity="0.85"/>
<ellipse cx="147" cy="213" rx="10" ry="2.6" fill="#768190" opacity="0.85"/>
<ellipse cx="29" cy="219" rx="35" ry="1.1" fill="#111720" opacity="0.85"/>
<ellipse cx="274" cy="232" rx="25" ry="1.5" fill="#19202a" opacity="0.85"/>
<ellipse cx="29" cy="240" rx="35" ry="1.6" fill="#19202a" opacity="0.85"/>
<ellipse cx="281" cy="186" rx="25" ry="1.0" fill="#444e5a" opacity="0.85"/>
<ellipse cx="214" cy="272" rx="26" ry="3.3" fill="#131921" opacity="0.85"/>
<ellipse cx="336" cy="196" rx="24" ry="1.4" fill="#111720" opacity="0.85"/>
<ellipse cx="387" cy="246" rx="14" ry="2.0" fill="#66717e" opacity="0.85"/>
<ellipse cx="176" cy="171" rx="17" ry="0.8" fill="#444e5a" opacity="0.85"/>
<ellipse cx="97" cy="170" rx="23" ry="0.6" fill="#66717e" opacity="0.85"/>
<ellipse cx="401" cy="258" rx="24" ry="2.3" fill="#56616e" opacity="0.85"/>
<ellipse cx="190" cy="220" rx="26" ry="2.3" fill="#394250" opacity="0.85"/>
<ellipse cx="232" cy="263" rx="45" ry="3.4" fill="#394250" opacity="0.85"/>
<ellipse cx="26" cy="274" rx="15" ry="3.8" fill="#19202a" opacity="0.85"/>
<ellipse cx="202" cy="229" rx="35" ry="1.6" fill="#66717e" opacity="0.85"/>
<ellipse cx="305" cy="194" rx="17" ry="1.4" fill="#19202a" opacity="0.85"/>
<ellipse cx="131" cy="263" rx="31" ry="1.2" fill="#56616e" opacity="0.85"/>
<ellipse cx="96" cy="277" rx="44" ry="4.0" fill="#151b23" opacity="0.85"/>
<ellipse cx="255" cy="254" rx="18" ry="1.8" fill="#394250" opacity="0.85"/>
<ellipse cx="453" cy="291" rx="52" ry="3.5" fill="#19202a" opacity="0.85"/>
<ellipse cx="196" cy="280" rx="42" ry="1.8" fill="#394250" opacity="0.85"/>
<ellipse cx="466" cy="235" rx="12" ry="2.8" fill="#56616e" opacity="0.85"/>
<ellipse cx="282" cy="282" rx="29" ry="2.0" fill="#768190" opacity="0.85"/>
<ellipse cx="56" cy="154" rx="12" ry="1.0" fill="#444e5a" opacity="0.85"/>
<ellipse cx="160" cy="210" rx="23" ry="0.8" fill="#66717e" opacity="0.85"/>
<ellipse cx="136" cy="218" rx="17" ry="1.1" fill="#151b23" opacity="0.85"/>
<ellipse cx="74" cy="282" rx="44" ry="3.2" fill="#66717e" opacity="0.85"/>
<ellipse cx="429" cy="179" rx="13" ry="1.4" fill="#131921" opacity="0.85"/>
<ellipse cx="351" cy="245" rx="27" ry="2.3" fill="#0e131a" opacity="0.85"/>
<ellipse cx="453" cy="179" rx="7" ry="0.8" fill="#19202a" opacity="0.85"/>
<ellipse cx="113" cy="294" rx="29" ry="4.0" fill="#19202a" opacity="0.85"/>
<ellipse cx="485" cy="254" rx="25" ry="1.2" fill="#0e131a" opacity="0.85"/>
<ellipse cx="28" cy="279" rx="37" ry="1.9" fill="#0e131a" opacity="0.85"/>
<ellipse cx="125" cy="225" rx="16" ry="2.7" fill="#444e5a" opacity="0.85"/>
<ellipse cx="290" cy="283" rx="20" ry="2.0" fill="#131921" opacity="0.85"/>
<ellipse cx="115" cy="250" rx="31" ry="1.2" fill="#56616e" opacity="0.85"/>
<ellipse cx="256" cy="216" rx="22" ry="0.9" fill="#111720" opacity="0.85"/>
<ellipse cx="261" cy="238" rx="22" ry="2.3" fill="#131921" opacity="0.85"/>
<ellipse cx="383" cy="193" rx="12" ry="1.2" fill="#444e5a" opacity="0.85"/>
<ellipse cx="403" cy="154" rx="7" ry="1.6" fill="#111720" opacity="0.85"/>
<ellipse cx="380" cy="219" rx="19" ry="2.8" fill="#151b23" opacity="0.85"/>
<ellipse cx="-4" cy="159" rx="18" ry="1.7" fill="#19202a" opacity="0.85"/>
<ellipse cx="398" cy="249" rx="27" ry="2.3" fill="#444e5a" opacity="0.85"/>
<ellipse cx="258" cy="262" rx="31" ry="3.1" fill="#56616e" opacity="0.85"/>
<ellipse cx="92" cy="241" rx="23" ry="2.8" fill="#0e131a" opacity="0.85"/>
<ellipse cx="265" cy="189" rx="26" ry="1.7" fill="#768190" opacity="0.85"/>
<ellipse cx="294" cy="155" rx="17" ry="1.2" fill="#131921" opacity="0.85"/>
<ellipse cx="301" cy="199" rx="22" ry="2.2" fill="#444e5a" opacity="0.85"/>
<ellipse cx="107" cy="216" rx="30" ry="0.9" fill="#131921" opacity="0.85"/>
<ellipse cx="264" cy="235" rx="33" ry="1.5" fill="#131921" opacity="0.85"/>
<ellipse cx="198" cy="158" rx="17" ry="1.6" fill="#444e5a" opacity="0.85"/>
<ellipse cx="389" cy="267" rx="28" ry="2.9" fill="#444e5a" opacity="0.85"/>
<ellipse cx="103" cy="176" rx="9" ry="1.7" fill="#111720" opacity="0.85"/>
<ellipse cx="-6" cy="268" rx="25" ry="2.1" fill="#0e131a" opacity="0.85"/>
<ellipse cx="496" cy="256" rx="14" ry="3.0" fill="#111720" opacity="0.85"/>
<ellipse cx="41" cy="298" rx="31" ry="3.6" fill="#66717e" opacity="0.85"/>
<ellipse cx="190" cy="151" rx="13" ry="0.6" fill="#444e5a" opacity="0.85"/>
<ellipse cx="198" cy="195" rx="9" ry="0.7" fill="#111720" opacity="0.85"/>
<ellipse cx="102" cy="184" rx="18" ry="1.0" fill="#151b23" opacity="0.85"/>
<ellipse cx="87" cy="163" rx="11" ry="1.9" fill="#111720" opacity="0.85"/>
<ellipse cx="50" cy="183" rx="19" ry="2.3" fill="#19202a" opacity="0.85"/>
<ellipse cx="471" cy="235" rx="36" ry="3.1" fill="#131921" opacity="0.85"/>
<ellipse cx="180" cy="219" rx="31" ry="1.6" fill="#66717e" opacity="0.85"/>
<ellipse cx="155" cy="182" rx="10" ry="1.5" fill="#131921" opacity="0.85"/>
<ellipse cx="184" cy="222" rx="25" ry="2.5" fill="#151b23" opacity="0.85"/>
<ellipse cx="516" cy="217" rx="27" ry="2.6" fill="#0e131a" opacity="0.85"/>
<ellipse cx="195" cy="231" rx="10" ry="1.5" fill="#768190" opacity="0.85"/>
<ellipse cx="251" cy="243" rx="33" ry="2.2" fill="#111720" opacity="0.85"/>
<ellipse cx="361" cy="289" rx="22" ry="2.3" fill="#131921" opacity="0.85"/>
<ellipse cx="395" cy="259" rx="15" ry="1.7" fill="#56616e" opacity="0.85"/>
<ellipse cx="140" cy="153" rx="11" ry="0.6" fill="#394250" opacity="0.85"/>
<ellipse cx="392" cy="199" rx="20" ry="0.8" fill="#394250" opacity="0.85"/>
<ellipse cx="234" cy="241" rx="15" ry="2.2" fill="#131921" opacity="0.85"/>
<ellipse cx="135" cy="155" rx="12" ry="1.2" fill="#131921" opacity="0.85"/>
<ellipse cx="267" cy="228" rx="18" ry="1.9" fill="#394250" opacity="0.85"/>
<ellipse cx="75" cy="172" rx="11" ry="1.7" fill="#394250" opacity="0.85"/>
<ellipse cx="249" cy="171" rx="12" ry="0.7" fill="#19202a" opacity="0.85"/>
<ellipse cx="81" cy="202" rx="8" ry="0.8" fill="#151b23" opacity="0.85"/>
<ellipse cx="413" cy="235" rx="39" ry="1.6" fill="#56616e" opacity="0.85"/>
<ellipse cx="81" cy="288" rx="39" ry="3.2" fill="#19202a" opacity="0.85"/>
<ellipse cx="314" cy="185" rx="8" ry="1.4" fill="#394250" opacity="0.85"/>
<ellipse cx="234" cy="224" rx="35" ry="1.5" fill="#768190" opacity="0.85"/>
<ellipse cx="478" cy="183" rx="11" ry="1.9" fill="#19202a" opacity="0.85"/>
<ellipse cx="94" cy="250" rx="13" ry="1.8" fill="#394250" opacity="0.85"/>
<ellipse cx="228" cy="271" rx="20" ry="3.5" fill="#768190" opacity="0.85"/>
<ellipse cx="-27" cy="255" rx="23" ry="2.0" fill="#56616e" opacity="0.85"/>
<ellipse cx="112" cy="287" rx="26" ry="3.8" fill="#768190" opacity="0.85"/>
<ellipse cx="142" cy="220" rx="15" ry="0.9" fill="#19202a" opacity="0.85"/>
<ellipse cx="169" cy="199" rx="14" ry="2.2" fill="#131921" opacity="0.85"/>
<ellipse cx="175" cy="246" rx="20" ry="3.2" fill="#66717e" opacity="0.85"/>
<ellipse cx="488" cy="236" rx="33" ry="2.4" fill="#111720" opacity="0.85"/>
<ellipse cx="303" cy="231" rx="10" ry="1.0" fill="#151b23" opacity="0.85"/>
<ellipse cx="174" cy="282" rx="46" ry="1.2" fill="#131921" opacity="0.85"/>
<ellipse cx="113" cy="253" rx="26" ry="2.2" fill="#66717e" opacity="0.85"/>
<ellipse cx="68" cy="172" rx="10" ry="1.6" fill="#0e131a" opacity="0.85"/>
<ellipse cx="479" cy="228" rx="37" ry="0.8" fill="#444e5a" opacity="0.85"/>
<ellipse cx="324" cy="224" rx="24" ry="2.2" fill="#444e5a" opacity="0.85"/>
<ellipse cx="347" cy="283" rx="42" ry="1.9" fill="#56616e" opacity="0.85"/>
<ellipse cx="135" cy="283" rx="39" ry="3.2" fill="#131921" opacity="0.85"/>
<ellipse cx="422" cy="295" rx="18" ry="3.2" fill="#151b23" opacity="0.85"/>
<ellipse cx="124" cy="271" rx="26" ry="2.1" fill="#444e5a" opacity="0.85"/>
<ellipse cx="322" cy="225" rx="19" ry="2.4" fill="#444e5a" opacity="0.85"/>
<ellipse cx="451" cy="261" rx="45" ry="3.3" fill="#768190" opacity="0.85"/>
<ellipse cx="213" cy="167" rx="20" ry="1.2" fill="#131921" opacity="0.85"/>
<ellipse cx="191" cy="243" rx="25" ry="1.8" fill="#394250" opacity="0.85"/>
<ellipse cx="406" cy="226" rx="20" ry="2.5" fill="#768190" opacity="0.85"/>
<ellipse cx="342" cy="205" rx="12" ry="2.4" fill="#0e131a" opacity="0.85"/>
<ellipse cx="424" cy="276" rx="32" ry="2.3" fill="#131921" opacity="0.85"/>
<ellipse cx="425" cy="243" rx="35" ry="1.2" fill="#394250" opacity="0.85"/>
<ellipse cx="123" cy="243" rx="30" ry="3.4" fill="#151b23" opacity="0.85"/>
<ellipse cx="487" cy="238" rx="39" ry="1.2" fill="#768190" opacity="0.85"/>
<ellipse cx="314" cy="213" rx="18" ry="2.7" fill="#131921" opacity="0.85"/>
<ellipse cx="359" cy="157" rx="7" ry="0.5" fill="#768190" opacity="0.85"/>
<ellipse cx="262" cy="203" rx="27" ry="1.5" fill="#66717e" opacity="0.85"/>
<ellipse cx="439" cy="275" rx="17" ry="1.3" fill="#151b23" opacity="0.85"/>
<ellipse cx="430" cy="270" rx="21" ry="2.2" fill="#111720" opacity="0.85"/>
<ellipse cx="40" cy="211" rx="23" ry="2.2" fill="#0e131a" opacity="0.85"/>
<ellipse cx="408" cy="232" rx="13" ry="1.3" fill="#56616e" opacity="0.85"/>
<ellipse cx="462" cy="233" rx="35" ry="1.9" fill="#131921" opacity="0.85"/>
<ellipse cx="-29" cy="199" rx="21" ry="1.0" fill="#394250" opacity="0.85"/>
<ellipse cx="87" cy="191" rx="18" ry="1.3" fill="#768190" opacity="0.85"/>
<ellipse cx="45" cy="234" rx="9" ry="2.7" fill="#56616e" opacity="0.85"/>
<ellipse cx="148" cy="151" rx="7" ry="1.4" fill="#394250" opacity="0.85"/>
<ellipse cx="192" cy="223" rx="31" ry="1.7" fill="#66717e" opacity="0.85"/>
<ellipse cx="305" cy="182" rx="24" ry="1.0" fill="#0e131a" opacity="0.85"/>
<ellipse cx="444" cy="291" rx="52" ry="2.6" fill="#66717e" opacity="0.85"/>
<ellipse cx="-25" cy="176" rx="9" ry="0.8" fill="#56616e" opacity="0.85"/>
<ellipse cx="-27" cy="191" rx="19" ry="0.8" fill="#151b23" opacity="0.85"/>
<ellipse cx="78" cy="152" rx="20" ry="0.5" fill="#444e5a" opacity="0.85"/>
<ellipse cx="97" cy="190" rx="27" ry="1.5" fill="#768190" opacity="0.85"/>
<ellipse cx="423" cy="270" rx="39" ry="3.9" fill="#56616e" opacity="0.85"/>
<ellipse cx="230" cy="290" rx="45" ry="2.4" fill="#111720" opacity="0.85"/>
<ellipse cx="283" cy="154" rx="8" ry="1.0" fill="#19202a" opacity="0.85"/>
<ellipse cx="115" cy="226" rx="37" ry="2.3" fill="#151b23" opacity="0.85"/>
<ellipse cx="116" cy="203" rx="30" ry="1.3" fill="#56616e" opacity="0.85"/>
<ellipse cx="80" cy="190" rx="11" ry="0.7" fill="#131921" opacity="0.85"/>
<ellipse cx="341" cy="232" rx="14" ry="1.1" fill="#131921" opacity="0.85"/>
<ellipse cx="62" cy="206" rx="8" ry="1.5" fill="#66717e" opacity="0.85"/>
<ellipse cx="140" cy="211" rx="22" ry="2.7" fill="#0e131a" opacity="0.85"/>
<ellipse cx="58" cy="153" rx="6" ry="1.2" fill="#111720" opacity="0.85"/>
<ellipse cx="201" cy="298" rx="52" ry="1.9" fill="#394250" opacity="0.85"/>
<ellipse cx="457" cy="267" rx="40" ry="1.2" fill="#394250" opacity="0.85"/>
<ellipse cx="140" cy="292" rx="19" ry="2.3" fill="#66717e" opacity="0.85"/>
<ellipse cx="315" cy="172" rx="13" ry="1.6" fill="#0e131a" opacity="0.85"/>
<ellipse cx="153" cy="242" rx="23" ry="2.7" fill="#394250" opacity="0.85"/>
<ellipse cx="278" cy="226" rx="12" ry="2.7" fill="#151b23" opacity="0.85"/>
<ellipse cx="222" cy="215" rx="31" ry="1.8" fill="#394250" opacity="0.85"/>
<ellipse cx="281" cy="240" rx="25" ry="1.0" fill="#151b23" opacity="0.85"/>
<ellipse cx="292" cy="217" rx="24" ry="2.8" fill="#131921" opacity="0.85"/>
<ellipse cx="144" cy="231" rx="16" ry="2.3" fill="#0e131a" opacity="0.85"/>
<ellipse cx="514" cy="261" rx="24" ry="3.4" fill="#131921" opacity="0.85"/>
<ellipse cx="463" cy="263" rx="14" ry="1.5" fill="#131921" opacity="0.85"/>
<ellipse cx="407" cy="274" rx="30" ry="4.0" fill="#56616e" opacity="0.85"/>
<ellipse cx="-19" cy="178" rx="13" ry="1.4" fill="#19202a" opacity="0.85"/>
<ellipse cx="260" cy="218" rx="32" ry="1.2" fill="#768190" opacity="0.85"/>
<ellipse cx="94" cy="294" rx="16" ry="2.6" fill="#151b23" opacity="0.85"/>
<ellipse cx="0" cy="282" rx="30" ry="1.3" fill="#444e5a" opacity="0.85"/>
<ellipse cx="-3" cy="296" rx="51" ry="3.8" fill="#131921" opacity="0.85"/>
<ellipse cx="-19" cy="165" rx="12" ry="1.8" fill="#768190" opacity="0.85"/>
<ellipse cx="62" cy="168" rx="13" ry="1.8" fill="#111720" opacity="0.85"/>
<ellipse cx="234" cy="220" rx="10" ry="2.2" fill="#444e5a" opacity="0.85"/>
<ellipse cx="451" cy="244" rx="33" ry="1.4" fill="#394250" opacity="0.85"/>
<ellipse cx="417" cy="207" rx="25" ry="2.4" fill="#768190" opacity="0.85"/>
<ellipse cx="77" cy="249" rx="16" ry="2.9" fill="#131921" opacity="0.85"/>
<ellipse cx="221" cy="254" rx="14" ry="1.3" fill="#19202a" opacity="0.85"/>
<ellipse cx="160" cy="242" rx="15" ry="3.4" fill="#0e131a" opacity="0.85"/>
<ellipse cx="162" cy="260" rx="21" ry="2.1" fill="#131921" opacity="0.85"/>
<ellipse cx="109" cy="161" rx="12" ry="1.4" fill="#768190" opacity="0.85"/>
<ellipse cx="244" cy="219" rx="34" ry="1.5" fill="#394250" opacity="0.85"/>
<ellipse cx="284" cy="185" rx="13" ry="2.1" fill="#768190" opacity="0.85"/>
<ellipse cx="4" cy="293" rx="38" ry="1.9" fill="#151b23" opacity="0.85"/>
<ellipse cx="376" cy="208" rx="23" ry="1.7" fill="#56616e" opacity="0.85"/>
<ellipse cx="147" cy="205" rx="22" ry="2.0" fill="#768190" opacity="0.85"/>
<ellipse cx="349" cy="194" rx="22" ry="1.1" fill="#394250" opacity="0.85"/>
<ellipse cx="292" cy="206" rx="29" ry="1.5" fill="#768190" opacity="0.85"/>
<ellipse cx="419" cy="201" rx="28" ry="1.9" fill="#444e5a" opacity="0.85"/>
<ellipse cx="214" cy="249" rx="16" ry="3.0" fill="#66717e" opacity="0.85"/>
<ellipse cx="365" cy="206" rx="24" ry="1.4" fill="#66717e" opacity="0.85"/>
<ellipse cx="47" cy="250" rx="12" ry="1.4" fill="#444e5a" opacity="0.85"/>
<ellipse cx="336" cy="197" rx="21" ry="2.5" fill="#66717e" opacity="0.85"/>
<ellipse cx="181" cy="299" rx="47" ry="3.3" fill="#56616e" opacity="0.85"/>
<ellipse cx="-3" cy="300" rx="31" ry="2.5" fill="#0e131a" opacity="0.85"/>
<ellipse cx="287" cy="228" rx="23" ry="2.8" fill="#444e5a" opacity="0.85"/>
<ellipse cx="375" cy="209" rx="10" ry="1.1" fill="#111720" opacity="0.85"/>
<ellipse cx="467" cy="268" rx="35" ry="3.8" fill="#151b23" opacity="0.85"/>
</g>
<g filter="url(#b3)">
<ellipse cx="399" cy="576" rx="10" ry="1.6" fill="#0f1318" opacity="0.7"/>
<ellipse cx="488" cy="638" rx="4" ry="2.7" fill="#353c46" opacity="0.7"/>
<ellipse cx="497" cy="496" rx="13" ry="1.8" fill="#353c46" opacity="0.7"/>
<ellipse cx="393" cy="498" rx="7" ry="3.8" fill="#353c46" opacity="0.7"/>
<ellipse cx="419" cy="478" rx="13" ry="2.4" fill="#0f1318" opacity="0.7"/>
<ellipse cx="499" cy="462" rx="11" ry="2.1" fill="#2c313a" opacity="0.7"/>
<ellipse cx="483" cy="459" rx="5" ry="4.5" fill="#2c313a" opacity="0.7"/>
<ellipse cx="450" cy="343" rx="6" ry="3.7" fill="#353c46" opacity="0.7"/>
<ellipse cx="433" cy="645" rx="4" ry="2.0" fill="#2c313a" opacity="0.7"/>
<ellipse cx="467" cy="560" rx="6" ry="3.4" fill="#2c313a" opacity="0.7"/>
<ellipse cx="442" cy="439" rx="15" ry="3.4" fill="#2c313a" opacity="0.7"/>
<ellipse cx="419" cy="433" rx="7" ry="3.4" fill="#353c46" opacity="0.7"/>
<ellipse cx="423" cy="628" rx="10" ry="3.8" fill="#353c46" opacity="0.7"/>
<ellipse cx="450" cy="638" rx="10" ry="4.7" fill="#0f1318" opacity="0.7"/>
<ellipse cx="416" cy="520" rx="11" ry="2.3" fill="#2c313a" opacity="0.7"/>
<ellipse cx="440" cy="448" rx="8" ry="3.0" fill="#0f1318" opacity="0.7"/>
<ellipse cx="421" cy="333" rx="10" ry="2.1" fill="#0f1318" opacity="0.7"/>
<ellipse cx="431" cy="491" rx="7" ry="1.8" fill="#0f1318" opacity="0.7"/>
<ellipse cx="426" cy="302" rx="15" ry="3.3" fill="#353c46" opacity="0.7"/>
<ellipse cx="386" cy="469" rx="9" ry="4.9" fill="#2c313a" opacity="0.7"/>
<ellipse cx="426" cy="543" rx="7" ry="4.9" fill="#353c46" opacity="0.7"/>
<ellipse cx="420" cy="426" rx="11" ry="3.6" fill="#0f1318" opacity="0.7"/>
<ellipse cx="399" cy="358" rx="13" ry="2.7" fill="#2c313a" opacity="0.7"/>
<ellipse cx="453" cy="368" rx="14" ry="4.8" fill="#353c46" opacity="0.7"/>
<ellipse cx="431" cy="606" rx="7" ry="3.9" fill="#2c313a" opacity="0.7"/>
<ellipse cx="411" cy="436" rx="7" ry="1.6" fill="#2c313a" opacity="0.7"/>
<ellipse cx="476" cy="592" rx="12" ry="1.7" fill="#0f1318" opacity="0.7"/>
<ellipse cx="457" cy="308" rx="11" ry="4.7" fill="#353c46" opacity="0.7"/>
<ellipse cx="456" cy="554" rx="12" ry="2.2" fill="#353c46" opacity="0.7"/>
<ellipse cx="470" cy="292" rx="9" ry="3.9" fill="#2c313a" opacity="0.7"/>
<ellipse cx="395" cy="353" rx="12" ry="2.0" fill="#0f1318" opacity="0.7"/>
<ellipse cx="477" cy="539" rx="9" ry="4.6" fill="#353c46" opacity="0.7"/>
<ellipse cx="398" cy="316" rx="14" ry="3.8" fill="#353c46" opacity="0.7"/>
<ellipse cx="466" cy="552" rx="9" ry="3.9" fill="#353c46" opacity="0.7"/>
<ellipse cx="491" cy="496" rx="7" ry="3.0" fill="#353c46" opacity="0.7"/>
<ellipse cx="494" cy="342" rx="6" ry="2.5" fill="#0f1318" opacity="0.7"/>
<ellipse cx="435" cy="302" rx="9" ry="3.9" fill="#0f1318" opacity="0.7"/>
<ellipse cx="464" cy="472" rx="9" ry="4.2" fill="#2c313a" opacity="0.7"/>
<ellipse cx="483" cy="492" rx="13" ry="2.6" fill="#2c313a" opacity="0.7"/>
<ellipse cx="404" cy="417" rx="8" ry="3.6" fill="#353c46" opacity="0.7"/>
<ellipse cx="437" cy="542" rx="11" ry="3.1" fill="#353c46" opacity="0.7"/>
<ellipse cx="466" cy="344" rx="9" ry="1.8" fill="#0f1318" opacity="0.7"/>
<ellipse cx="415" cy="376" rx="13" ry="3.5" fill="#0f1318" opacity="0.7"/>
<ellipse cx="477" cy="629" rx="7" ry="2.4" fill="#2c313a" opacity="0.7"/>
<ellipse cx="456" cy="449" rx="11" ry="4.9" fill="#353c46" opacity="0.7"/>
<ellipse cx="441" cy="458" rx="7" ry="4.1" fill="#2c313a" opacity="0.7"/>
<ellipse cx="443" cy="540" rx="6" ry="5.0" fill="#0f1318" opacity="0.7"/>
<ellipse cx="448" cy="499" rx="8" ry="2.0" fill="#0f1318" opacity="0.7"/>
<ellipse cx="396" cy="587" rx="13" ry="2.3" fill="#2c313a" opacity="0.7"/>
<ellipse cx="470" cy="607" rx="8" ry="2.1" fill="#2c313a" opacity="0.7"/>
<ellipse cx="488" cy="504" rx="15" ry="3.9" fill="#0f1318" opacity="0.7"/>
<ellipse cx="476" cy="330" rx="14" ry="3.6" fill="#353c46" opacity="0.7"/>
<ellipse cx="398" cy="651" rx="8" ry="2.1" fill="#0f1318" opacity="0.7"/>
<ellipse cx="418" cy="536" rx="11" ry="2.4" fill="#2c313a" opacity="0.7"/>
<ellipse cx="418" cy="390" rx="7" ry="3.3" fill="#0f1318" opacity="0.7"/>
<ellipse cx="484" cy="349" rx="14" ry="3.6" fill="#353c46" opacity="0.7"/>
<ellipse cx="404" cy="584" rx="13" ry="4.0" fill="#353c46" opacity="0.7"/>
<ellipse cx="415" cy="575" rx="5" ry="4.8" fill="#0f1318" opacity="0.7"/>
<ellipse cx="447" cy="530" rx="10" ry="3.9" fill="#0f1318" opacity="0.7"/>
<ellipse cx="494" cy="558" rx="10" ry="3.5" fill="#0f1318" opacity="0.7"/>
<ellipse cx="394" cy="616" rx="11" ry="3.5" fill="#353c46" opacity="0.7"/>
<ellipse cx="420" cy="563" rx="4" ry="4.8" fill="#2c313a" opacity="0.7"/>
<ellipse cx="427" cy="362" rx="8" ry="2.0" fill="#353c46" opacity="0.7"/>
<ellipse cx="401" cy="535" rx="9" ry="2.0" fill="#353c46" opacity="0.7"/>
<ellipse cx="497" cy="649" rx="15" ry="3.4" fill="#0f1318" opacity="0.7"/>
<ellipse cx="406" cy="484" rx="10" ry="2.7" fill="#0f1318" opacity="0.7"/>
<ellipse cx="486" cy="631" rx="5" ry="2.0" fill="#2c313a" opacity="0.7"/>
<ellipse cx="441" cy="319" rx="11" ry="4.9" fill="#353c46" opacity="0.7"/>
<ellipse cx="488" cy="323" rx="7" ry="2.3" fill="#0f1318" opacity="0.7"/>
<ellipse cx="497" cy="636" rx="15" ry="4.7" fill="#0f1318" opacity="0.7"/>
<ellipse cx="387" cy="634" rx="10" ry="3.6" fill="#353c46" opacity="0.7"/>
<ellipse cx="488" cy="500" rx="8" ry="2.1" fill="#353c46" opacity="0.7"/>
<ellipse cx="490" cy="348" rx="5" ry="2.5" fill="#0f1318" opacity="0.7"/>
<ellipse cx="388" cy="642" rx="4" ry="4.4" fill="#353c46" opacity="0.7"/>
<ellipse cx="482" cy="513" rx="13" ry="3.8" fill="#2c313a" opacity="0.7"/>
<ellipse cx="393" cy="290" rx="14" ry="4.9" fill="#2c313a" opacity="0.7"/>
<ellipse cx="424" cy="440" rx="8" ry="1.6" fill="#2c313a" opacity="0.7"/>
<ellipse cx="452" cy="387" rx="10" ry="2.7" fill="#353c46" opacity="0.7"/>
<ellipse cx="460" cy="419" rx="15" ry="2.9" fill="#2c313a" opacity="0.7"/>
<ellipse cx="414" cy="345" rx="10" ry="4.2" fill="#0f1318" opacity="0.7"/>
<ellipse cx="463" cy="358" rx="11" ry="3.6" fill="#353c46" opacity="0.7"/>
<ellipse cx="486" cy="384" rx="6" ry="2.3" fill="#0f1318" opacity="0.7"/>
<ellipse cx="470" cy="478" rx="6" ry="1.6" fill="#2c313a" opacity="0.7"/>
<ellipse cx="394" cy="489" rx="13" ry="2.4" fill="#2c313a" opacity="0.7"/>
<ellipse cx="449" cy="307" rx="6" ry="3.8" fill="#2c313a" opacity="0.7"/>
<ellipse cx="499" cy="625" rx="9" ry="2.0" fill="#353c46" opacity="0.7"/>
<ellipse cx="424" cy="578" rx="13" ry="2.8" fill="#0f1318" opacity="0.7"/>
<ellipse cx="494" cy="497" rx="5" ry="4.9" fill="#2c313a" opacity="0.7"/>
<ellipse cx="389" cy="309" rx="15" ry="3.0" fill="#2c313a" opacity="0.7"/>
<ellipse cx="409" cy="343" rx="15" ry="4.9" fill="#0f1318" opacity="0.7"/>
</g>
<g filter="url(#b6)">
<path d="M-10 210 Q60 200 150 204 Q175 210 150 222 Q80 236 -10 240 Z" fill="#6f6452" opacity="0.75"/>
<path d="M160 196 Q200 192 240 198 Q230 205 180 208 Z" fill="#5d5a52" opacity="0.6"/>
<path d="M425 470 Q450 455 491 462 L495 520 Q470 515 440 498 Q420 485 425 470 Z" fill="#77654a" opacity="0.8"/>
</g>
<g filter="url(#b3)">
<path d="M300 242 Q320 238 338 240 Q360 246 372 251 Q392 256 406 262 Q425 268 430 274 Q405 277 386 275 Q362 272 346 270 Q334 262 326 258 Q312 252 300 250 Z" fill="#9ba5ae" opacity="0.72"/>
<ellipse cx="350" cy="262" rx="8" ry="2.5" fill="#2a323c" opacity="0.6"/>
</g>
</g>
<polygon points="114.5,212.2 386.0,290.2 473.5,755.5 -435.6,377.0" fill="url(#pnl)"/>
<g clip-path="url(#pclip)">
<rect x="0" y="200" width="491" height="458" fill="url(#dirt)"/>
<g filter="url(#b14)">
<ellipse cx="330" cy="295" rx="80" ry="26" fill="#8a95a2" opacity="0.55"/>
<ellipse cx="90" cy="260" rx="60" ry="20" fill="#6c7a8c" opacity="0.3"/>
</g>
<g filter="url(#b07)">
<g opacity="0.9" fill="#e2e8ee">
<polygon points="-62.5,189.1 -21.7,200.7 -20.9,198.0 -61.7,186.3"/>
<polygon points="-21.7,200.7 19.0,212.4 19.8,209.6 -20.9,198.0"/>
<polygon points="19.0,212.4 59.8,224.0 60.5,221.3 19.8,209.6"/>
<polygon points="59.8,224.0 100.5,235.6 101.2,233.0 60.5,221.3"/>
<polygon points="100.5,235.6 141.2,247.3 142.0,244.7 101.2,233.0"/>
<polygon points="141.2,247.3 182.0,258.9 182.7,256.4 142.0,244.7"/>
<polygon points="182.0,258.9 222.7,270.6 223.4,268.1 182.7,256.4"/>
<polygon points="222.7,270.6 263.4,282.2 264.2,279.8 223.4,268.1"/>
<polygon points="263.4,282.2 304.2,293.9 304.9,291.5 264.2,279.8"/>
<polygon points="304.2,293.9 344.9,305.5 345.6,303.1 304.9,291.5"/>
<polygon points="344.9,305.5 385.7,317.2 386.3,314.8 345.6,303.1"/>
<polygon points="385.7,317.2 426.4,328.8 427.1,326.5 386.3,314.8"/>
<polygon points="426.4,328.8 467.1,340.5 467.8,338.2 427.1,326.5"/>
<polygon points="467.1,340.5 507.9,352.1 508.5,349.9 467.8,338.2"/>
<polygon points="507.9,352.1 548.6,363.8 549.2,361.6 508.5,349.9"/>
</g>
<g opacity="0.85" fill="#e2e8ee">
<polygon points="-62.3,224.9 -17.0,238.8 -16.6,237.5 -61.9,223.5"/>
<polygon points="-17.0,238.8 28.3,252.7 28.7,251.5 -16.6,237.5"/>
<polygon points="28.3,252.7 73.5,266.7 73.9,265.4 28.7,251.5"/>
<polygon points="73.5,266.7 118.8,280.6 119.2,279.4 73.9,265.4"/>
<polygon points="118.8,280.6 164.1,294.6 164.5,293.3 119.2,279.4"/>
<polygon points="164.1,294.6 209.3,308.5 209.7,307.3 164.5,293.3"/>
<polygon points="209.3,308.5 254.6,322.5 255.0,321.2 209.7,307.3"/>
<polygon points="254.6,322.5 299.9,336.4 300.3,335.2 255.0,321.2"/>
<polygon points="299.9,336.4 345.2,350.3 345.5,349.2 300.3,335.2"/>
<polygon points="345.2,350.3 390.4,364.3 390.8,363.1 345.5,349.2"/>
<polygon points="390.4,364.3 435.7,378.2 436.0,377.1 390.8,363.1"/>
<polygon points="435.7,378.2 481.0,392.2 481.3,391.0 436.0,377.1"/>
<polygon points="481.0,392.2 526.2,406.1 526.6,405.0 481.3,391.0"/>
</g>
<g opacity="0.8" fill="#e2e8ee">
<polygon points="-66.9,279.3 -0.4,302.2 0.4,299.8 -66.1,276.9"/>
<polygon points="-0.4,302.2 66.1,325.1 66.9,322.7 0.4,299.8"/>
<polygon points="66.1,325.1 132.6,347.9 133.4,345.7 66.9,322.7"/>
<polygon points="132.6,347.9 199.1,370.8 199.9,368.6 133.4,345.7"/>
<polygon points="199.1,370.8 265.6,393.7 266.4,391.5 199.9,368.6"/>
<polygon points="265.6,393.7 332.1,416.6 332.9,414.4 266.4,391.5"/>
<polygon points="332.1,416.6 398.6,439.5 399.4,437.3 332.9,414.4"/>
<polygon points="398.6,439.5 465.1,462.4 465.9,460.2 399.4,437.3"/>
<polygon points="465.1,462.4 531.6,485.3 532.4,483.1 465.9,460.2"/>
</g>
<g opacity="0.75" fill="#e2e8ee">
<polygon points="-76.3,392.6 -38.3,406.9 -37.7,405.2 -75.7,391.0"/>
<polygon points="-38.3,406.9 -0.3,421.1 0.3,419.5 -37.7,405.2"/>
<polygon points="-0.3,421.1 37.7,435.4 38.3,433.7 0.3,419.5"/>
<polygon points="37.7,435.4 75.7,449.6 76.3,448.0 38.3,433.7"/>
<polygon points="75.7,449.6 113.7,463.9 114.3,462.2 76.3,448.0"/>
<polygon points="113.7,463.9 151.7,478.1 152.3,476.5 114.3,462.2"/>
<polygon points="151.7,478.1 189.7,492.4 190.3,490.7 152.3,476.5"/>
<polygon points="189.7,492.4 227.7,506.6 228.3,505.0 190.3,490.7"/>
<polygon points="227.7,506.6 265.7,520.9 266.3,519.2 228.3,505.0"/>
<polygon points="265.7,520.9 303.7,535.1 304.3,533.5 266.3,519.2"/>
<polygon points="303.7,535.1 341.7,549.3 342.3,547.8 304.3,533.5"/>
<polygon points="341.7,549.3 379.7,563.6 380.3,562.0 342.3,547.8"/>
<polygon points="379.7,563.6 417.7,577.8 418.3,576.3 380.3,562.0"/>
<polygon points="417.7,577.8 455.7,592.1 456.3,590.5 418.3,576.3"/>
<polygon points="455.7,592.1 493.7,606.3 494.3,604.8 456.3,590.5"/>
<polygon points="493.7,606.3 531.7,620.6 532.3,619.0 494.3,604.8"/>
</g>
<g opacity="0.65" fill="#e2e8ee">
<polygon points="-86.9,449.2 -51.2,463.3 -50.6,461.6 -86.2,447.6"/>
<polygon points="-51.2,463.3 -15.6,477.4 -14.9,475.7 -50.6,461.6"/>
<polygon points="-15.6,477.4 20.1,491.4 20.7,489.8 -14.9,475.7"/>
<polygon points="20.1,491.4 55.7,505.5 56.4,503.8 20.7,489.8"/>
<polygon points="55.7,505.5 91.4,519.6 92.0,517.9 56.4,503.8"/>
<polygon points="91.4,519.6 127.0,533.6 127.7,532.0 92.0,517.9"/>
<polygon points="127.0,533.6 162.7,547.7 163.3,546.0 127.7,532.0"/>
<polygon points="162.7,547.7 198.3,561.8 199.0,560.1 163.3,546.0"/>
<polygon points="198.3,561.8 234.0,575.8 234.6,574.2 199.0,560.1"/>
<polygon points="234.0,575.8 269.6,589.9 270.3,588.2 234.6,574.2"/>
<polygon points="269.6,589.9 305.3,604.0 305.9,602.3 270.3,588.2"/>
<polygon points="305.3,604.0 340.9,618.0 341.6,616.4 305.9,602.3"/>
<polygon points="340.9,618.0 376.6,632.1 377.2,630.5 341.6,616.4"/>
<polygon points="376.6,632.1 412.2,646.1 412.9,644.5 377.2,630.5"/>
<polygon points="412.2,646.1 447.9,660.2 448.5,658.6 412.9,644.5"/>
<polygon points="447.9,660.2 483.5,674.3 484.2,672.7 448.5,658.6"/>
<polygon points="483.5,674.3 519.2,688.3 519.8,686.7 484.2,672.7"/>
<polygon points="519.2,688.3 554.8,702.4 555.5,700.8 519.8,686.7"/>
</g>
<g opacity="0.22" fill="#e2e8ee">
<polygon points="-64.7,249.6 -0.1,262.3 0.1,261.7 -64.6,249.0"/>
<polygon points="-0.1,262.3 64.6,275.0 64.7,274.4 0.1,261.7"/>
<polygon points="64.6,275.0 129.3,287.6 129.4,287.0 64.7,274.4"/>
<polygon points="129.3,287.6 193.9,300.3 194.1,299.7 129.4,287.0"/>
<polygon points="193.9,300.3 258.6,312.9 258.7,312.4 194.1,299.7"/>
<polygon points="258.6,312.9 323.3,325.6 323.4,325.1 258.7,312.4"/>
<polygon points="323.3,325.6 388.0,338.2 388.0,337.8 323.4,325.1"/>
<polygon points="388.0,338.2 452.6,350.9 452.7,350.4 388.0,337.8"/>
<polygon points="452.6,350.9 517.3,363.6 517.4,363.1 452.7,350.4"/>
<polygon points="517.3,363.6 582.0,376.2 582.0,375.8 517.4,363.1"/>
</g>
<g opacity="0.25" fill="#e2e8ee">
<polygon points="-68.5,332.9 -0.1,356.4 0.1,355.6 -68.2,332.1"/>
<polygon points="-0.1,356.4 68.2,379.8 68.5,379.2 0.1,355.6"/>
<polygon points="68.2,379.8 136.5,403.3 136.8,402.7 68.5,379.2"/>
<polygon points="136.5,403.3 204.9,426.8 205.1,426.2 136.8,402.7"/>
<polygon points="204.9,426.8 273.2,450.3 273.4,449.7 205.1,426.2"/>
<polygon points="273.2,450.3 341.6,473.8 341.8,473.2 273.4,449.7"/>
<polygon points="341.6,473.8 409.9,497.3 410.1,496.7 341.8,473.2"/>
<polygon points="409.9,497.3 478.2,520.8 478.4,520.2 410.1,496.7"/>
<polygon points="478.2,520.8 546.6,544.3 546.8,543.7 478.4,520.2"/>
</g>
<g opacity="0.85" fill="#e2e8ee">
<polygon points="-82.7,585.3 -59.0,563.3 -60.5,561.7 -84.3,583.6"/>
<polygon points="-59.0,563.3 -35.3,541.3 -36.7,539.8 -60.5,561.7"/>
<polygon points="-35.3,541.3 -11.5,519.3 -12.9,517.8 -36.7,539.8"/>
<polygon points="-11.5,519.3 12.2,497.3 10.9,495.9 -12.9,517.8"/>
<polygon points="12.2,497.3 36.0,475.3 34.7,473.9 10.9,495.9"/>
<polygon points="36.0,475.3 59.7,453.3 58.5,452.0 34.7,473.9"/>
<polygon points="59.7,453.3 83.4,431.3 82.3,430.0 58.5,452.0"/>
<polygon points="83.4,431.3 107.2,409.3 106.1,408.1 82.3,430.0"/>
<polygon points="107.2,409.3 130.9,387.3 129.9,386.2 106.1,408.1"/>
<polygon points="130.9,387.3 154.6,365.3 153.7,364.2 129.9,386.2"/>
<polygon points="154.6,365.3 178.4,343.2 177.5,342.3 153.7,364.2"/>
<polygon points="178.4,343.2 202.1,321.2 201.3,320.3 177.5,342.3"/>
<polygon points="202.1,321.2 225.9,299.2 225.1,298.4 201.3,320.3"/>
<polygon points="225.9,299.2 249.6,277.2 248.9,276.4 225.1,298.4"/>
</g>
<g opacity="0.85" fill="#e2e8ee">
<polygon points="15.4,719.2 34.4,690.7 32.2,689.2 13.2,717.7"/>
<polygon points="34.4,690.7 53.4,662.1 51.3,660.8 32.2,689.2"/>
<polygon points="53.4,662.1 72.3,633.6 70.3,632.3 51.3,660.8"/>
<polygon points="72.3,633.6 91.3,605.1 89.4,603.8 70.3,632.3"/>
<polygon points="91.3,605.1 110.2,576.6 108.4,575.4 89.4,603.8"/>
<polygon points="110.2,576.6 129.2,548.1 127.5,546.9 108.4,575.4"/>
<polygon points="129.2,548.1 148.2,519.6 146.5,518.5 127.5,546.9"/>
<polygon points="148.2,519.6 167.1,491.1 165.6,490.0 146.5,518.5"/>
<polygon points="167.1,491.1 186.1,462.6 184.6,461.6 165.6,490.0"/>
<polygon points="186.1,462.6 205.0,434.1 203.6,433.1 184.6,461.6"/>
<polygon points="205.0,434.1 224.0,405.5 222.7,404.7 203.6,433.1"/>
<polygon points="224.0,405.5 242.9,377.0 241.7,376.2 222.7,404.7"/>
<polygon points="242.9,377.0 261.9,348.5 260.8,347.8 241.7,376.2"/>
<polygon points="261.9,348.5 280.9,320.0 279.8,319.3 260.8,347.8"/>
<polygon points="280.9,320.0 299.8,291.5 298.9,290.9 279.8,319.3"/>
</g>
<g opacity="0.8" fill="#e2e8ee">
<polygon points="270.7,706.4 278.5,670.1 276.4,669.7 268.6,705.9"/>
<polygon points="278.5,670.1 286.2,633.8 284.3,633.4 276.4,669.7"/>
<polygon points="286.2,633.8 293.9,597.5 292.1,597.1 284.3,633.4"/>
<polygon points="293.9,597.5 301.7,561.3 299.9,560.9 292.1,597.1"/>
<polygon points="301.7,561.3 309.4,525.0 307.8,524.6 299.9,560.9"/>
<polygon points="309.4,525.0 317.2,488.7 315.6,488.4 307.8,524.6"/>
<polygon points="317.2,488.7 324.9,452.4 323.5,452.1 315.6,488.4"/>
<polygon points="324.9,452.4 332.6,416.2 331.3,415.9 323.5,452.1"/>
<polygon points="332.6,416.2 340.4,379.9 339.2,379.6 331.3,415.9"/>
<polygon points="340.4,379.9 348.1,343.6 347.0,343.4 339.2,379.6"/>
<polygon points="348.1,343.6 355.8,307.3 354.8,307.1 347.0,343.4"/>
</g>
<g opacity="0.8" fill="#e2e8ee">
<polygon points="-62.3,434.0 -47.4,424.6 -48.3,423.1 -63.2,432.5"/>
<polygon points="-47.4,424.6 -32.5,415.2 -33.4,413.8 -48.3,423.1"/>
<polygon points="-32.5,415.2 -17.7,405.7 -18.6,404.4 -33.4,413.8"/>
<polygon points="-17.7,405.7 -2.8,396.3 -3.7,395.0 -18.6,404.4"/>
<polygon points="-2.8,396.3 12.0,386.9 11.2,385.6 -3.7,395.0"/>
<polygon points="12.0,386.9 26.9,377.5 26.1,376.2 11.2,385.6"/>
<polygon points="26.9,377.5 41.8,368.1 41.0,366.9 26.1,376.2"/>
<polygon points="41.8,368.1 56.6,358.7 55.9,357.5 41.0,366.9"/>
<polygon points="56.6,358.7 71.5,349.3 70.8,348.1 55.9,357.5"/>
<polygon points="71.5,349.3 86.4,339.9 85.7,338.7 70.8,348.1"/>
<polygon points="86.4,339.9 101.2,330.5 100.5,329.4 85.7,338.7"/>
<polygon points="101.2,330.5 116.1,321.1 115.4,320.0 100.5,329.4"/>
<polygon points="116.1,321.1 131.0,311.6 130.3,310.6 115.4,320.0"/>
<polygon points="131.0,311.6 145.8,302.2 145.2,301.2 130.3,310.6"/>
<polygon points="145.8,302.2 160.7,292.8 160.1,291.9 145.2,301.2"/>
<polygon points="160.7,292.8 175.6,283.4 175.0,282.5 160.1,291.9"/>
<polygon points="175.6,283.4 190.4,274.0 189.9,273.1 175.0,282.5"/>
<polygon points="190.4,274.0 205.3,264.6 204.8,263.7 189.9,273.1"/>
</g>
<g opacity="0.75" fill="#e2e8ee">
<polygon points="-73.2,364.6 -56.1,356.7 -56.8,355.3 -73.9,363.2"/>
<polygon points="-56.1,356.7 -39.1,348.7 -39.7,347.4 -56.8,355.3"/>
<polygon points="-39.1,348.7 -22.0,340.8 -22.6,339.5 -39.7,347.4"/>
<polygon points="-22.0,340.8 -4.9,332.9 -5.5,331.6 -22.6,339.5"/>
<polygon points="-4.9,332.9 12.2,324.9 11.6,323.6 -5.5,331.6"/>
<polygon points="12.2,324.9 29.3,317.0 28.7,315.7 11.6,323.6"/>
<polygon points="29.3,317.0 46.4,309.0 45.8,307.8 28.7,315.7"/>
<polygon points="46.4,309.0 63.5,301.1 62.9,299.9 45.8,307.8"/>
<polygon points="63.5,301.1 80.5,293.1 80.0,292.0 62.9,299.9"/>
<polygon points="80.5,293.1 97.6,285.2 97.1,284.1 80.0,292.0"/>
<polygon points="97.6,285.2 114.7,277.2 114.2,276.2 97.1,284.1"/>
<polygon points="114.7,277.2 131.8,269.3 131.3,268.3 114.2,276.2"/>
<polygon points="131.8,269.3 148.9,261.3 148.4,260.4 131.3,268.3"/>
<polygon points="148.9,261.3 166.0,253.4 165.5,252.4 148.4,260.4"/>
</g>
<g opacity="0.7" fill="#e2e8ee">
<polygon points="-69.2,313.0 -56.2,308.3 -56.7,307.0 -69.6,311.8"/>
<polygon points="-56.2,308.3 -43.2,303.5 -43.7,302.3 -56.7,307.0"/>
<polygon points="-43.2,303.5 -30.3,298.8 -30.7,297.6 -43.7,302.3"/>
<polygon points="-30.3,298.8 -17.3,294.0 -17.8,292.8 -30.7,297.6"/>
<polygon points="-17.3,294.0 -4.4,289.3 -4.8,288.1 -17.8,292.8"/>
<polygon points="-4.4,289.3 8.6,284.5 8.2,283.4 -4.8,288.1"/>
<polygon points="8.6,284.5 21.5,279.7 21.1,278.6 8.2,283.4"/>
<polygon points="21.5,279.7 34.5,275.0 34.1,273.9 21.1,278.6"/>
<polygon points="34.5,275.0 47.4,270.2 47.0,269.2 34.1,273.9"/>
<polygon points="47.4,270.2 60.4,265.5 60.0,264.4 47.0,269.2"/>
<polygon points="60.4,265.5 73.3,260.7 73.0,259.7 60.0,264.4"/>
<polygon points="73.3,260.7 86.3,256.0 85.9,255.0 73.0,259.7"/>
<polygon points="86.3,256.0 99.2,251.2 98.9,250.2 85.9,255.0"/>
<polygon points="99.2,251.2 112.2,246.5 111.9,245.5 98.9,250.2"/>
<polygon points="112.2,246.5 125.2,241.7 124.8,240.8 111.9,245.5"/>
</g>
<g opacity="0.6" fill="#e2e8ee">
<polygon points="-61.5,280.8 -52.4,277.6 -52.7,276.6 -61.9,279.7"/>
<polygon points="-52.4,277.6 -43.2,274.5 -43.6,273.4 -52.7,276.6"/>
<polygon points="-43.2,274.5 -34.0,271.3 -34.4,270.3 -43.6,273.4"/>
<polygon points="-34.0,271.3 -24.9,268.2 -25.2,267.1 -34.4,270.3"/>
<polygon points="-24.9,268.2 -15.7,265.0 -16.1,264.0 -25.2,267.1"/>
<polygon points="-15.7,265.0 -6.6,261.8 -6.9,260.8 -16.1,264.0"/>
<polygon points="-6.6,261.8 2.6,258.7 2.3,257.7 -6.9,260.8"/>
<polygon points="2.6,258.7 11.8,255.5 11.4,254.5 2.3,257.7"/>
<polygon points="11.8,255.5 20.9,252.3 20.6,251.4 11.4,254.5"/>
<polygon points="20.9,252.3 30.1,249.2 29.8,248.2 20.6,251.4"/>
<polygon points="30.1,249.2 39.2,246.0 38.9,245.1 29.8,248.2"/>
<polygon points="39.2,246.0 48.4,242.8 48.1,241.9 38.9,245.1"/>
<polygon points="48.4,242.8 57.6,239.7 57.3,238.8 48.1,241.9"/>
<polygon points="57.6,239.7 66.7,236.5 66.4,235.6 57.3,238.8"/>
<polygon points="66.7,236.5 75.9,233.4 75.6,232.5 66.4,235.6"/>
<polygon points="75.9,233.4 85.0,230.2 84.7,229.3 75.6,232.5"/>
</g>
<g opacity="0.6" fill="#e2e8ee">
<polygon points="245.3,250.5 239.4,256.4 239.9,256.9 245.8,251.0"/>
<polygon points="239.4,256.4 233.6,262.3 234.1,262.8 239.9,256.9"/>
<polygon points="233.6,262.3 227.7,268.2 228.3,268.7 234.1,262.8"/>
</g>
<g opacity="0.6" fill="#e2e8ee">
<polygon points="292.8,259.2 286.9,266.1 287.4,266.5 293.3,259.6"/>
<polygon points="286.9,266.1 281.0,273.0 281.5,273.4 287.4,266.5"/>
<polygon points="281.0,273.0 275.1,279.8 275.7,280.3 281.5,273.4"/>
</g>
<g opacity="0.6" fill="#e2e8ee">
<polygon points="337.7,272.5 332.8,280.3 333.4,280.7 338.3,272.9"/>
<polygon points="332.8,280.3 327.9,288.2 328.5,288.6 333.4,280.7"/>
<polygon points="327.9,288.2 323.0,296.0 323.6,296.4 328.5,288.6"/>
</g>
<g opacity="0.6" fill="#e2e8ee">
<polygon points="198.8,237.6 192.8,243.7 193.3,244.2 199.4,238.2"/>
<polygon points="192.8,243.7 186.7,249.8 187.2,250.3 193.3,244.2"/>
<polygon points="186.7,249.8 180.6,255.8 181.2,256.4 187.2,250.3"/>
</g>
<g opacity="0.6" fill="#e2e8ee">
<polygon points="153.7,224.1 148.0,230.3 148.6,230.9 154.2,224.6"/>
<polygon points="148.0,230.3 142.4,236.6 143.0,237.2 148.6,230.9"/>
<polygon points="142.4,236.6 136.7,242.9 137.4,243.4 143.0,237.2"/>
</g>
</g>
<g filter="url(#b15)">
<path d="M298 458 Q318 446 352 452 Q378 458 380 482 Q376 502 350 506 Q322 504 306 490 Q292 474 298 458 Z" fill="#92794f" opacity="0.9"/>
<path d="M312 512 Q340 506 370 516 Q392 530 396 560 Q398 592 392 612 Q372 600 350 596 Q322 590 312 560 Q306 535 312 512 Z" fill="#8e764d" opacity="0.9"/>
<path d="M242 560 Q268 540 296 548 Q312 570 305 600 Q300 630 310 665 L236 665 Q230 620 236 590 Z" fill="#8a724b" opacity="0.85"/>
<path d="M300 598 Q340 592 380 604 Q392 630 385 665 L296 665 Q292 630 300 598 Z" fill="#90784e" opacity="0.9"/>
</g>
<clipPath id="patchclip"><path d="M298 458 Q318 446 352 452 Q378 458 380 482 Q376 502 350 506 Q322 504 306 490 Q292 474 298 458 Z"/><path d="M312 512 Q340 506 370 516 Q392 530 396 560 Q398 592 392 612 Q372 600 350 596 Q322 590 312 560 Q306 535 312 512 Z"/><path d="M242 560 Q268 540 296 548 Q312 570 305 600 Q300 630 310 665 L236 665 Q230 620 236 590 Z"/><path d="M300 598 Q340 592 380 604 Q392 630 385 665 L296 665 Q292 630 300 598 Z"/></clipPath>
<g filter="url(#b15)"><g clip-path="url(#patchclip)">
<ellipse cx="292" cy="644" rx="1.6" ry="2.4" fill="#1a1c1e" opacity="0.53"/>
<ellipse cx="268" cy="478" rx="3.1" ry="2.8" fill="#1a1c1e" opacity="0.45"/>
<ellipse cx="392" cy="544" rx="2.2" ry="1.2" fill="#1a1c1e" opacity="0.30"/>
<ellipse cx="390" cy="465" rx="1.7" ry="1.7" fill="#1a1c1e" opacity="0.22"/>
<ellipse cx="286" cy="488" rx="1.5" ry="2.1" fill="#1a1c1e" opacity="0.39"/>
<ellipse cx="329" cy="609" rx="2.7" ry="2.9" fill="#1a1c1e" opacity="0.23"/>
<ellipse cx="273" cy="466" rx="2.1" ry="2.5" fill="#1a1c1e" opacity="0.52"/>
<ellipse cx="319" cy="483" rx="2.1" ry="2.1" fill="#1a1c1e" opacity="0.30"/>
<ellipse cx="366" cy="652" rx="2.5" ry="2.2" fill="#1a1c1e" opacity="0.50"/>
<ellipse cx="312" cy="490" rx="3.8" ry="3.0" fill="#1a1c1e" opacity="0.21"/>
<ellipse cx="361" cy="533" rx="1.3" ry="1.3" fill="#1a1c1e" opacity="0.26"/>
<ellipse cx="357" cy="494" rx="1.3" ry="1.4" fill="#1a1c1e" opacity="0.48"/>
<ellipse cx="318" cy="586" rx="2.5" ry="1.4" fill="#1a1c1e" opacity="0.21"/>
<ellipse cx="286" cy="459" rx="1.9" ry="2.2" fill="#1a1c1e" opacity="0.33"/>
<ellipse cx="314" cy="580" rx="2.1" ry="1.7" fill="#1a1c1e" opacity="0.51"/>
<ellipse cx="331" cy="537" rx="2.7" ry="1.9" fill="#1a1c1e" opacity="0.32"/>
<ellipse cx="386" cy="499" rx="3.8" ry="2.7" fill="#1a1c1e" opacity="0.51"/>
<ellipse cx="263" cy="556" rx="4.0" ry="1.6" fill="#1a1c1e" opacity="0.26"/>
<ellipse cx="355" cy="499" rx="2.8" ry="1.3" fill="#1a1c1e" opacity="0.53"/>
<ellipse cx="283" cy="470" rx="3.1" ry="1.7" fill="#1a1c1e" opacity="0.40"/>
<ellipse cx="318" cy="642" rx="2.6" ry="1.8" fill="#1a1c1e" opacity="0.20"/>
<ellipse cx="317" cy="506" rx="2.8" ry="2.3" fill="#1a1c1e" opacity="0.36"/>
<ellipse cx="251" cy="553" rx="2.5" ry="2.3" fill="#1a1c1e" opacity="0.54"/>
<ellipse cx="282" cy="542" rx="1.4" ry="2.6" fill="#1a1c1e" opacity="0.28"/>
<ellipse cx="372" cy="616" rx="1.9" ry="2.8" fill="#1a1c1e" opacity="0.38"/>
<ellipse cx="306" cy="565" rx="3.8" ry="2.0" fill="#1a1c1e" opacity="0.37"/>
<ellipse cx="284" cy="625" rx="2.6" ry="1.7" fill="#1a1c1e" opacity="0.27"/>
<ellipse cx="271" cy="624" rx="3.4" ry="3.0" fill="#1a1c1e" opacity="0.52"/>
<ellipse cx="348" cy="616" rx="3.2" ry="2.6" fill="#1a1c1e" opacity="0.48"/>
<ellipse cx="265" cy="619" rx="2.0" ry="1.5" fill="#1a1c1e" opacity="0.52"/>
<ellipse cx="240" cy="556" rx="2.2" ry="2.6" fill="#1a1c1e" opacity="0.41"/>
<ellipse cx="385" cy="644" rx="3.0" ry="1.1" fill="#1a1c1e" opacity="0.43"/>
<ellipse cx="254" cy="654" rx="3.6" ry="1.6" fill="#1a1c1e" opacity="0.27"/>
<ellipse cx="350" cy="608" rx="4.0" ry="2.2" fill="#1a1c1e" opacity="0.24"/>
<ellipse cx="355" cy="462" rx="3.6" ry="2.5" fill="#1a1c1e" opacity="0.47"/>
<ellipse cx="379" cy="568" rx="3.8" ry="2.3" fill="#1a1c1e" opacity="0.37"/>
<ellipse cx="299" cy="524" rx="1.3" ry="1.3" fill="#1a1c1e" opacity="0.48"/>
<ellipse cx="274" cy="586" rx="3.4" ry="2.4" fill="#1a1c1e" opacity="0.38"/>
<ellipse cx="288" cy="507" rx="1.7" ry="2.3" fill="#1a1c1e" opacity="0.44"/>
<ellipse cx="391" cy="519" rx="3.8" ry="2.8" fill="#1a1c1e" opacity="0.30"/>
<ellipse cx="392" cy="579" rx="3.9" ry="2.5" fill="#1a1c1e" opacity="0.32"/>
<ellipse cx="282" cy="559" rx="2.6" ry="1.1" fill="#1a1c1e" opacity="0.50"/>
<ellipse cx="324" cy="548" rx="3.3" ry="1.5" fill="#1a1c1e" opacity="0.27"/>
<ellipse cx="331" cy="500" rx="2.1" ry="1.1" fill="#1a1c1e" opacity="0.22"/>
<ellipse cx="294" cy="560" rx="3.9" ry="2.3" fill="#1a1c1e" opacity="0.35"/>
<ellipse cx="303" cy="499" rx="2.5" ry="2.9" fill="#1a1c1e" opacity="0.24"/>
<ellipse cx="307" cy="593" rx="3.3" ry="2.1" fill="#1a1c1e" opacity="0.42"/>
<ellipse cx="390" cy="638" rx="1.9" ry="2.1" fill="#1a1c1e" opacity="0.55"/>
<ellipse cx="323" cy="489" rx="3.3" ry="1.1" fill="#1a1c1e" opacity="0.25"/>
<ellipse cx="326" cy="507" rx="3.2" ry="2.5" fill="#1a1c1e" opacity="0.31"/>
<ellipse cx="362" cy="585" rx="3.2" ry="1.9" fill="#1a1c1e" opacity="0.35"/>
<ellipse cx="253" cy="549" rx="3.9" ry="2.8" fill="#1a1c1e" opacity="0.22"/>
<ellipse cx="248" cy="506" rx="3.1" ry="1.9" fill="#1a1c1e" opacity="0.24"/>
<ellipse cx="306" cy="569" rx="3.3" ry="1.8" fill="#1a1c1e" opacity="0.43"/>
<ellipse cx="348" cy="578" rx="1.3" ry="2.4" fill="#1a1c1e" opacity="0.24"/>
<ellipse cx="245" cy="549" rx="1.2" ry="1.1" fill="#1a1c1e" opacity="0.34"/>
<ellipse cx="313" cy="472" rx="3.9" ry="2.7" fill="#1a1c1e" opacity="0.37"/>
<ellipse cx="332" cy="516" rx="4.0" ry="1.2" fill="#1a1c1e" opacity="0.31"/>
<ellipse cx="272" cy="630" rx="2.6" ry="1.8" fill="#1a1c1e" opacity="0.34"/>
<ellipse cx="381" cy="504" rx="3.4" ry="2.4" fill="#1a1c1e" opacity="0.36"/>
<ellipse cx="296" cy="541" rx="2.5" ry="1.6" fill="#1a1c1e" opacity="0.42"/>
<ellipse cx="303" cy="513" rx="3.4" ry="1.9" fill="#1a1c1e" opacity="0.37"/>
<ellipse cx="380" cy="545" rx="2.3" ry="2.8" fill="#1a1c1e" opacity="0.54"/>
<ellipse cx="365" cy="533" rx="3.1" ry="2.5" fill="#1a1c1e" opacity="0.30"/>
<ellipse cx="355" cy="648" rx="3.0" ry="2.3" fill="#1a1c1e" opacity="0.35"/>
<ellipse cx="343" cy="497" rx="3.4" ry="2.1" fill="#1a1c1e" opacity="0.54"/>
<ellipse cx="292" cy="598" rx="1.2" ry="1.8" fill="#1a1c1e" opacity="0.47"/>
<ellipse cx="279" cy="578" rx="1.8" ry="1.8" fill="#1a1c1e" opacity="0.55"/>
<ellipse cx="268" cy="640" rx="1.4" ry="2.2" fill="#1a1c1e" opacity="0.49"/>
<ellipse cx="373" cy="531" rx="2.9" ry="2.4" fill="#1a1c1e" opacity="0.47"/>
<ellipse cx="358" cy="570" rx="1.9" ry="2.4" fill="#1a1c1e" opacity="0.40"/>
<ellipse cx="325" cy="655" rx="1.6" ry="2.6" fill="#1a1c1e" opacity="0.31"/>
<ellipse cx="355" cy="648" rx="2.0" ry="2.1" fill="#1a1c1e" opacity="0.38"/>
<ellipse cx="317" cy="485" rx="3.0" ry="2.8" fill="#1a1c1e" opacity="0.43"/>
<ellipse cx="283" cy="618" rx="2.4" ry="1.3" fill="#1a1c1e" opacity="0.41"/>
<ellipse cx="311" cy="560" rx="4.0" ry="2.1" fill="#1a1c1e" opacity="0.53"/>
<ellipse cx="294" cy="608" rx="1.4" ry="1.6" fill="#1a1c1e" opacity="0.44"/>
<ellipse cx="349" cy="622" rx="2.3" ry="1.5" fill="#1a1c1e" opacity="0.33"/>
<ellipse cx="324" cy="455" rx="2.2" ry="2.3" fill="#1a1c1e" opacity="0.25"/>
<ellipse cx="287" cy="632" rx="3.8" ry="1.5" fill="#1a1c1e" opacity="0.26"/>
<ellipse cx="255" cy="468" rx="3.4" ry="2.5" fill="#1a1c1e" opacity="0.29"/>
<ellipse cx="316" cy="595" rx="1.3" ry="2.6" fill="#1a1c1e" opacity="0.50"/>
<ellipse cx="271" cy="596" rx="3.2" ry="1.7" fill="#1a1c1e" opacity="0.51"/>
<ellipse cx="272" cy="549" rx="2.1" ry="1.9" fill="#1a1c1e" opacity="0.48"/>
<ellipse cx="329" cy="577" rx="4.0" ry="1.4" fill="#1a1c1e" opacity="0.28"/>
<ellipse cx="338" cy="481" rx="3.9" ry="1.7" fill="#1a1c1e" opacity="0.35"/>
<ellipse cx="307" cy="622" rx="3.8" ry="2.4" fill="#1a1c1e" opacity="0.26"/>
<ellipse cx="294" cy="597" rx="1.8" ry="2.8" fill="#1a1c1e" opacity="0.51"/>
<ellipse cx="273" cy="526" rx="1.8" ry="2.4" fill="#1a1c1e" opacity="0.22"/>
<ellipse cx="350" cy="463" rx="3.6" ry="2.1" fill="#1a1c1e" opacity="0.40"/>
<ellipse cx="252" cy="459" rx="2.2" ry="3.0" fill="#1a1c1e" opacity="0.41"/>
<ellipse cx="377" cy="463" rx="1.5" ry="1.0" fill="#1a1c1e" opacity="0.44"/>
<ellipse cx="265" cy="507" rx="3.1" ry="2.4" fill="#1a1c1e" opacity="0.31"/>
<ellipse cx="313" cy="510" rx="2.8" ry="1.7" fill="#1a1c1e" opacity="0.33"/>
<ellipse cx="277" cy="511" rx="1.9" ry="1.0" fill="#1a1c1e" opacity="0.31"/>
<ellipse cx="333" cy="506" rx="1.5" ry="2.7" fill="#1a1c1e" opacity="0.36"/>
<ellipse cx="320" cy="515" rx="3.7" ry="2.5" fill="#1a1c1e" opacity="0.42"/>
<ellipse cx="344" cy="594" rx="2.6" ry="1.8" fill="#1a1c1e" opacity="0.34"/>
<ellipse cx="319" cy="547" rx="2.7" ry="2.1" fill="#1a1c1e" opacity="0.48"/>
<ellipse cx="382" cy="497" rx="1.3" ry="1.6" fill="#1a1c1e" opacity="0.21"/>
<ellipse cx="367" cy="579" rx="2.0" ry="1.4" fill="#1a1c1e" opacity="0.50"/>
<ellipse cx="373" cy="592" rx="3.1" ry="2.5" fill="#1a1c1e" opacity="0.36"/>
<ellipse cx="301" cy="565" rx="3.7" ry="3.0" fill="#1a1c1e" opacity="0.52"/>
<ellipse cx="373" cy="465" rx="1.9" ry="2.9" fill="#1a1c1e" opacity="0.39"/>
<ellipse cx="320" cy="514" rx="3.6" ry="2.0" fill="#1a1c1e" opacity="0.55"/>
<ellipse cx="248" cy="657" rx="1.2" ry="1.3" fill="#1a1c1e" opacity="0.34"/>
<ellipse cx="341" cy="473" rx="2.8" ry="2.9" fill="#1a1c1e" opacity="0.35"/>
<ellipse cx="361" cy="573" rx="2.8" ry="1.3" fill="#1a1c1e" opacity="0.36"/>
<ellipse cx="384" cy="590" rx="1.8" ry="1.9" fill="#1a1c1e" opacity="0.39"/>
<ellipse cx="291" cy="570" rx="3.0" ry="1.0" fill="#1a1c1e" opacity="0.28"/>
<ellipse cx="344" cy="495" rx="1.4" ry="2.5" fill="#1a1c1e" opacity="0.32"/>
<ellipse cx="393" cy="566" rx="1.5" ry="2.3" fill="#1a1c1e" opacity="0.29"/>
<ellipse cx="370" cy="601" rx="3.3" ry="1.1" fill="#1a1c1e" opacity="0.21"/>
<ellipse cx="367" cy="479" rx="1.8" ry="1.1" fill="#1a1c1e" opacity="0.26"/>
<ellipse cx="314" cy="649" rx="2.1" ry="1.5" fill="#1a1c1e" opacity="0.49"/>
<ellipse cx="266" cy="582" rx="2.9" ry="2.9" fill="#1a1c1e" opacity="0.22"/>
<ellipse cx="328" cy="530" rx="3.5" ry="1.5" fill="#1a1c1e" opacity="0.45"/>
<ellipse cx="266" cy="553" rx="3.9" ry="1.5" fill="#1a1c1e" opacity="0.30"/>
<ellipse cx="386" cy="590" rx="1.4" ry="1.4" fill="#1a1c1e" opacity="0.28"/>
<ellipse cx="284" cy="626" rx="3.2" ry="3.0" fill="#1a1c1e" opacity="0.43"/>
<ellipse cx="339" cy="530" rx="3.2" ry="2.0" fill="#1a1c1e" opacity="0.22"/>
<ellipse cx="317" cy="530" rx="2.7" ry="1.1" fill="#1a1c1e" opacity="0.21"/>
<ellipse cx="397" cy="527" rx="2.1" ry="1.3" fill="#1a1c1e" opacity="0.41"/>
<ellipse cx="386" cy="488" rx="2.6" ry="2.0" fill="#1a1c1e" opacity="0.47"/>
<ellipse cx="329" cy="500" rx="1.7" ry="2.4" fill="#1a1c1e" opacity="0.23"/>
<ellipse cx="378" cy="457" rx="1.7" ry="1.9" fill="#1a1c1e" opacity="0.50"/>
<ellipse cx="338" cy="605" rx="3.3" ry="2.4" fill="#1a1c1e" opacity="0.22"/>
<ellipse cx="371" cy="481" rx="1.7" ry="1.1" fill="#1a1c1e" opacity="0.21"/>
<ellipse cx="380" cy="529" rx="1.4" ry="1.1" fill="#1a1c1e" opacity="0.50"/>
<ellipse cx="335" cy="641" rx="1.3" ry="1.2" fill="#1a1c1e" opacity="0.30"/>
<ellipse cx="267" cy="473" rx="1.8" ry="2.3" fill="#1a1c1e" opacity="0.26"/>
<ellipse cx="264" cy="561" rx="2.3" ry="1.3" fill="#1a1c1e" opacity="0.40"/>
<ellipse cx="319" cy="531" rx="2.5" ry="1.1" fill="#1a1c1e" opacity="0.42"/>
<ellipse cx="268" cy="520" rx="1.2" ry="2.8" fill="#1a1c1e" opacity="0.41"/>
<ellipse cx="300" cy="563" rx="3.8" ry="1.3" fill="#1a1c1e" opacity="0.33"/>
<ellipse cx="352" cy="527" rx="3.2" ry="2.8" fill="#1a1c1e" opacity="0.21"/>
<ellipse cx="283" cy="511" rx="3.3" ry="2.6" fill="#1a1c1e" opacity="0.44"/>
<ellipse cx="388" cy="489" rx="2.3" ry="2.7" fill="#1a1c1e" opacity="0.47"/>
<ellipse cx="254" cy="654" rx="3.3" ry="2.7" fill="#1a1c1e" opacity="0.33"/>
<ellipse cx="335" cy="649" rx="3.7" ry="2.2" fill="#1a1c1e" opacity="0.51"/>
<ellipse cx="400" cy="625" rx="7.3" ry="6.8" fill="#b09466" opacity="0.35"/>
<ellipse cx="260" cy="534" rx="6.8" ry="3.5" fill="#b09466" opacity="0.35"/>
<ellipse cx="364" cy="463" rx="7.1" ry="4.1" fill="#b09466" opacity="0.35"/>
<ellipse cx="289" cy="576" rx="5.0" ry="4.8" fill="#b09466" opacity="0.35"/>
<ellipse cx="377" cy="655" rx="5.3" ry="4.5" fill="#b09466" opacity="0.35"/>
<ellipse cx="350" cy="489" rx="8.2" ry="3.8" fill="#b09466" opacity="0.35"/>
<ellipse cx="327" cy="521" rx="4.0" ry="3.0" fill="#b09466" opacity="0.35"/>
<ellipse cx="236" cy="518" rx="5.4" ry="7.0" fill="#b09466" opacity="0.35"/>
<ellipse cx="341" cy="464" rx="7.6" ry="3.9" fill="#b09466" opacity="0.35"/>
<ellipse cx="315" cy="600" rx="8.3" ry="6.7" fill="#b09466" opacity="0.35"/>
<ellipse cx="305" cy="516" rx="6.0" ry="4.3" fill="#b09466" opacity="0.35"/>
<ellipse cx="358" cy="546" rx="7.4" ry="3.6" fill="#b09466" opacity="0.35"/>
<ellipse cx="364" cy="651" rx="5.0" ry="5.5" fill="#b09466" opacity="0.35"/>
<ellipse cx="263" cy="457" rx="6.1" ry="3.7" fill="#b09466" opacity="0.35"/>
<ellipse cx="356" cy="569" rx="7.4" ry="6.9" fill="#b09466" opacity="0.35"/>
<ellipse cx="246" cy="470" rx="4.2" ry="4.8" fill="#b09466" opacity="0.35"/>
<ellipse cx="371" cy="592" rx="6.7" ry="6.4" fill="#b09466" opacity="0.35"/>
<ellipse cx="297" cy="473" rx="7.2" ry="3.1" fill="#b09466" opacity="0.35"/>
<ellipse cx="274" cy="456" rx="4.8" ry="3.3" fill="#b09466" opacity="0.35"/>
<ellipse cx="323" cy="477" rx="7.0" ry="6.3" fill="#b09466" opacity="0.35"/>
<ellipse cx="292" cy="475" rx="7.4" ry="5.9" fill="#b09466" opacity="0.35"/>
<ellipse cx="381" cy="565" rx="6.9" ry="6.5" fill="#b09466" opacity="0.35"/>
<ellipse cx="347" cy="653" rx="5.4" ry="6.1" fill="#b09466" opacity="0.35"/>
<ellipse cx="340" cy="547" rx="4.1" ry="4.9" fill="#b09466" opacity="0.35"/>
<ellipse cx="279" cy="575" rx="6.5" ry="5.0" fill="#b09466" opacity="0.35"/>
<ellipse cx="246" cy="477" rx="7.0" ry="5.7" fill="#b09466" opacity="0.35"/>
<ellipse cx="398" cy="615" rx="5.5" ry="4.8" fill="#b09466" opacity="0.35"/>
<ellipse cx="319" cy="617" rx="6.0" ry="6.7" fill="#b09466" opacity="0.35"/>
<ellipse cx="315" cy="533" rx="6.4" ry="4.4" fill="#b09466" opacity="0.35"/>
<ellipse cx="400" cy="460" rx="6.0" ry="3.3" fill="#b09466" opacity="0.35"/>
<ellipse cx="347" cy="481" rx="4.7" ry="4.7" fill="#b09466" opacity="0.35"/>
<ellipse cx="335" cy="609" rx="6.2" ry="4.2" fill="#b09466" opacity="0.35"/>
<ellipse cx="296" cy="635" rx="5.1" ry="3.0" fill="#b09466" opacity="0.35"/>
<ellipse cx="381" cy="550" rx="4.7" ry="3.5" fill="#b09466" opacity="0.35"/>
<ellipse cx="382" cy="606" rx="4.3" ry="5.7" fill="#b09466" opacity="0.35"/>
<ellipse cx="271" cy="543" rx="7.0" ry="3.2" fill="#b09466" opacity="0.35"/>
<ellipse cx="389" cy="520" rx="4.7" ry="6.1" fill="#b09466" opacity="0.35"/>
<ellipse cx="254" cy="458" rx="7.3" ry="4.9" fill="#b09466" opacity="0.35"/>
<ellipse cx="384" cy="614" rx="5.0" ry="3.2" fill="#b09466" opacity="0.35"/>
<ellipse cx="335" cy="548" rx="5.5" ry="6.7" fill="#b09466" opacity="0.35"/>
</g></g>
<circle cx="225" cy="527" r="0.7" fill="#0c0f14" opacity="0.6"/>
<circle cx="446" cy="639" r="1.3" fill="#0c0f14" opacity="0.6"/>
<circle cx="259" cy="556" r="1.6" fill="#0c0f14" opacity="0.6"/>
<circle cx="406" cy="305" r="1.2" fill="#0c0f14" opacity="0.6"/>
<circle cx="203" cy="491" r="1.6" fill="#0c0f14" opacity="0.6"/>
<circle cx="428" cy="382" r="1.2" fill="#0c0f14" opacity="0.6"/>
<circle cx="258" cy="352" r="1.4" fill="#0c0f14" opacity="0.6"/>
<circle cx="395" cy="414" r="1.1" fill="#0c0f14" opacity="0.6"/>
<circle cx="376" cy="558" r="1.1" fill="#0c0f14" opacity="0.6"/>
<circle cx="197" cy="325" r="0.8" fill="#0c0f14" opacity="0.6"/>
<circle cx="416" cy="473" r="1.3" fill="#0c0f14" opacity="0.6"/>
<circle cx="273" cy="426" r="0.8" fill="#0c0f14" opacity="0.6"/>
<circle cx="462" cy="513" r="0.7" fill="#0c0f14" opacity="0.6"/>
<circle cx="378" cy="510" r="1.3" fill="#0c0f14" opacity="0.6"/>
<circle cx="399" cy="514" r="1.6" fill="#0c0f14" opacity="0.6"/>
<circle cx="461" cy="440" r="1.3" fill="#0c0f14" opacity="0.6"/>
<circle cx="276" cy="441" r="1.0" fill="#0c0f14" opacity="0.6"/>
<circle cx="361" cy="420" r="1.0" fill="#0c0f14" opacity="0.6"/>
<circle cx="423" cy="584" r="1.3" fill="#0c0f14" opacity="0.6"/>
<circle cx="422" cy="432" r="1.3" fill="#0c0f14" opacity="0.6"/>
<circle cx="238" cy="406" r="0.7" fill="#0c0f14" opacity="0.6"/>
<circle cx="408" cy="629" r="0.9" fill="#0c0f14" opacity="0.6"/>
<circle cx="277" cy="333" r="0.8" fill="#0c0f14" opacity="0.6"/>
<circle cx="358" cy="618" r="0.7" fill="#0c0f14" opacity="0.6"/>
<circle cx="239" cy="569" r="0.8" fill="#0c0f14" opacity="0.6"/>
<circle cx="432" cy="420" r="1.1" fill="#0c0f14" opacity="0.6"/>
<circle cx="223" cy="397" r="1.1" fill="#0c0f14" opacity="0.6"/>
<circle cx="246" cy="558" r="0.6" fill="#0c0f14" opacity="0.6"/>
<circle cx="358" cy="585" r="1.0" fill="#0c0f14" opacity="0.6"/>
<circle cx="219" cy="334" r="0.7" fill="#0c0f14" opacity="0.6"/>
<circle cx="406" cy="512" r="0.6" fill="#0c0f14" opacity="0.6"/>
<circle cx="301" cy="510" r="1.0" fill="#0c0f14" opacity="0.6"/>
<circle cx="171" cy="445" r="1.0" fill="#0c0f14" opacity="0.6"/>
<circle cx="461" cy="422" r="1.6" fill="#0c0f14" opacity="0.6"/>
<circle cx="429" cy="501" r="0.7" fill="#0c0f14" opacity="0.6"/>
<circle cx="410" cy="323" r="1.2" fill="#0c0f14" opacity="0.6"/>
<circle cx="190" cy="324" r="1.1" fill="#0c0f14" opacity="0.6"/>
<circle cx="208" cy="655" r="1.2" fill="#0c0f14" opacity="0.6"/>
<circle cx="438" cy="642" r="1.4" fill="#0c0f14" opacity="0.6"/>
<circle cx="360" cy="464" r="1.5" fill="#0c0f14" opacity="0.6"/>
<circle cx="368" cy="348" r="1.2" fill="#0c0f14" opacity="0.6"/>
<circle cx="288" cy="480" r="1.4" fill="#0c0f14" opacity="0.6"/>
<circle cx="374" cy="500" r="1.5" fill="#0c0f14" opacity="0.6"/>
<circle cx="416" cy="324" r="0.8" fill="#0c0f14" opacity="0.6"/>
<circle cx="175" cy="349" r="1.7" fill="#0c0f14" opacity="0.6"/>
<circle cx="256" cy="452" r="1.1" fill="#0c0f14" opacity="0.6"/>
<circle cx="335" cy="393" r="1.5" fill="#0c0f14" opacity="0.6"/>
<circle cx="263" cy="601" r="1.5" fill="#0c0f14" opacity="0.6"/>
<circle cx="160" cy="492" r="0.7" fill="#0c0f14" opacity="0.6"/>
<circle cx="434" cy="316" r="0.9" fill="#0c0f14" opacity="0.6"/>
<circle cx="398" cy="507" r="1.3" fill="#0c0f14" opacity="0.6"/>
<circle cx="288" cy="482" r="0.8" fill="#0c0f14" opacity="0.6"/>
<circle cx="303" cy="385" r="1.3" fill="#0c0f14" opacity="0.6"/>
<circle cx="193" cy="341" r="0.8" fill="#0c0f14" opacity="0.6"/>
<circle cx="325" cy="504" r="0.6" fill="#0c0f14" opacity="0.6"/>
<circle cx="466" cy="597" r="1.0" fill="#0c0f14" opacity="0.6"/>
<circle cx="209" cy="594" r="1.7" fill="#0c0f14" opacity="0.6"/>
<circle cx="215" cy="568" r="1.5" fill="#0c0f14" opacity="0.6"/>
<circle cx="451" cy="367" r="0.7" fill="#0c0f14" opacity="0.6"/>
<circle cx="211" cy="375" r="1.6" fill="#0c0f14" opacity="0.6"/>
<circle cx="442" cy="464" r="0.7" fill="#0c0f14" opacity="0.6"/>
<circle cx="269" cy="379" r="1.3" fill="#0c0f14" opacity="0.6"/>
<circle cx="383" cy="576" r="1.1" fill="#0c0f14" opacity="0.6"/>
<circle cx="302" cy="462" r="1.0" fill="#0c0f14" opacity="0.6"/>
<circle cx="301" cy="542" r="1.4" fill="#0c0f14" opacity="0.6"/>
<circle cx="261" cy="499" r="0.8" fill="#0c0f14" opacity="0.6"/>
<circle cx="174" cy="432" r="1.0" fill="#0c0f14" opacity="0.6"/>
<circle cx="170" cy="319" r="1.1" fill="#0c0f14" opacity="0.6"/>
<circle cx="452" cy="598" r="0.6" fill="#0c0f14" opacity="0.6"/>
<circle cx="258" cy="426" r="0.9" fill="#0c0f14" opacity="0.6"/>
<circle cx="202" cy="507" r="1.5" fill="#0c0f14" opacity="0.6"/>
<circle cx="278" cy="355" r="0.7" fill="#0c0f14" opacity="0.6"/>
<circle cx="165" cy="572" r="0.9" fill="#0c0f14" opacity="0.6"/>
<circle cx="384" cy="581" r="0.7" fill="#0c0f14" opacity="0.6"/>
<circle cx="219" cy="406" r="1.4" fill="#0c0f14" opacity="0.6"/>
<circle cx="388" cy="401" r="1.1" fill="#0c0f14" opacity="0.6"/>
<circle cx="270" cy="464" r="1.5" fill="#0c0f14" opacity="0.6"/>
<circle cx="241" cy="588" r="1.6" fill="#0c0f14" opacity="0.6"/>
<circle cx="346" cy="643" r="1.6" fill="#0c0f14" opacity="0.6"/>
<circle cx="213" cy="655" r="0.8" fill="#0c0f14" opacity="0.6"/>
<circle cx="409" cy="335" r="0.9" fill="#0c0f14" opacity="0.6"/>
<circle cx="297" cy="599" r="1.3" fill="#0c0f14" opacity="0.6"/>
<circle cx="223" cy="620" r="1.6" fill="#0c0f14" opacity="0.6"/>
<circle cx="318" cy="309" r="0.9" fill="#0c0f14" opacity="0.6"/>
<circle cx="251" cy="444" r="1.6" fill="#0c0f14" opacity="0.6"/>
<circle cx="344" cy="592" r="0.7" fill="#0c0f14" opacity="0.6"/>
<circle cx="236" cy="559" r="1.0" fill="#0c0f14" opacity="0.6"/>
<circle cx="231" cy="313" r="0.7" fill="#0c0f14" opacity="0.6"/>
<circle cx="288" cy="491" r="1.0" fill="#0c0f14" opacity="0.6"/>
<circle cx="335" cy="397" r="0.6" fill="#0c0f14" opacity="0.6"/>
<circle cx="369" cy="414" r="1.1" fill="#0c0f14" opacity="0.6"/>
<circle cx="277" cy="389" r="0.7" fill="#0c0f14" opacity="0.6"/>
<circle cx="252" cy="400" r="0.7" fill="#0c0f14" opacity="0.6"/>
<circle cx="169" cy="467" r="0.6" fill="#0c0f14" opacity="0.6"/>
<circle cx="432" cy="423" r="1.1" fill="#0c0f14" opacity="0.6"/>
<circle cx="323" cy="299" r="0.7" fill="#0c0f14" opacity="0.6"/>
<circle cx="403" cy="495" r="1.1" fill="#0c0f14" opacity="0.6"/>
<circle cx="267" cy="566" r="1.2" fill="#0c0f14" opacity="0.6"/>
<circle cx="406" cy="598" r="1.6" fill="#0c0f14" opacity="0.6"/>
<circle cx="385" cy="538" r="1.1" fill="#0c0f14" opacity="0.6"/>
<circle cx="325" cy="503" r="1.2" fill="#0c0f14" opacity="0.6"/>
<circle cx="414" cy="606" r="0.7" fill="#0c0f14" opacity="0.6"/>
<circle cx="393" cy="517" r="1.3" fill="#0c0f14" opacity="0.6"/>
<circle cx="442" cy="308" r="1.1" fill="#0c0f14" opacity="0.6"/>
<circle cx="276" cy="639" r="0.8" fill="#0c0f14" opacity="0.6"/>
<circle cx="335" cy="343" r="1.4" fill="#0c0f14" opacity="0.6"/>
<circle cx="312" cy="561" r="0.9" fill="#0c0f14" opacity="0.6"/>
<circle cx="434" cy="293" r="0.8" fill="#0c0f14" opacity="0.6"/>
<circle cx="387" cy="613" r="1.5" fill="#0c0f14" opacity="0.6"/>
<circle cx="245" cy="320" r="1.4" fill="#0c0f14" opacity="0.6"/>
<circle cx="387" cy="312" r="1.6" fill="#0c0f14" opacity="0.6"/>
<circle cx="324" cy="302" r="1.1" fill="#0c0f14" opacity="0.6"/>
<circle cx="265" cy="328" r="1.6" fill="#0c0f14" opacity="0.6"/>
<circle cx="450" cy="336" r="1.1" fill="#0c0f14" opacity="0.6"/>
<circle cx="245" cy="537" r="0.7" fill="#0c0f14" opacity="0.6"/>
<circle cx="263" cy="441" r="1.1" fill="#0c0f14" opacity="0.6"/>
<circle cx="295" cy="509" r="1.6" fill="#0c0f14" opacity="0.6"/>
<circle cx="449" cy="624" r="1.5" fill="#0c0f14" opacity="0.6"/>
<circle cx="231" cy="380" r="1.1" fill="#0c0f14" opacity="0.6"/>
<circle cx="359" cy="513" r="1.0" fill="#0c0f14" opacity="0.6"/>
<circle cx="467" cy="405" r="0.6" fill="#0c0f14" opacity="0.6"/>
<circle cx="188" cy="367" r="1.4" fill="#0c0f14" opacity="0.6"/>
<circle cx="421" cy="305" r="0.9" fill="#0c0f14" opacity="0.6"/>
<circle cx="235" cy="579" r="1.6" fill="#0c0f14" opacity="0.6"/>
<circle cx="242" cy="328" r="1.7" fill="#0c0f14" opacity="0.6"/>
<circle cx="461" cy="554" r="1.1" fill="#0c0f14" opacity="0.6"/>
<circle cx="392" cy="572" r="1.2" fill="#0c0f14" opacity="0.6"/>
<circle cx="244" cy="483" r="1.3" fill="#0c0f14" opacity="0.6"/>
<circle cx="261" cy="525" r="0.8" fill="#0c0f14" opacity="0.6"/>
<circle cx="461" cy="368" r="0.8" fill="#0c0f14" opacity="0.6"/>
<circle cx="458" cy="640" r="1.6" fill="#0c0f14" opacity="0.6"/>
<circle cx="421" cy="602" r="1.5" fill="#0c0f14" opacity="0.6"/>
<circle cx="336" cy="317" r="1.4" fill="#0c0f14" opacity="0.6"/>
<circle cx="419" cy="598" r="0.6" fill="#0c0f14" opacity="0.6"/>
<circle cx="179" cy="559" r="1.1" fill="#0c0f14" opacity="0.6"/>
<circle cx="437" cy="655" r="1.1" fill="#0c0f14" opacity="0.6"/>
<circle cx="369" cy="535" r="1.4" fill="#0c0f14" opacity="0.6"/>
<circle cx="274" cy="525" r="0.7" fill="#0c0f14" opacity="0.6"/>
<circle cx="439" cy="556" r="1.5" fill="#0c0f14" opacity="0.6"/>
<circle cx="303" cy="365" r="1.1" fill="#0c0f14" opacity="0.6"/>
<circle cx="371" cy="492" r="0.7" fill="#0c0f14" opacity="0.6"/>
<circle cx="161" cy="436" r="0.9" fill="#0c0f14" opacity="0.6"/>
<circle cx="230" cy="372" r="1.1" fill="#0c0f14" opacity="0.6"/>
<circle cx="376" cy="626" r="1.3" fill="#0c0f14" opacity="0.6"/>
<circle cx="166" cy="609" r="1.3" fill="#0c0f14" opacity="0.6"/>
<circle cx="387" cy="516" r="1.0" fill="#0c0f14" opacity="0.6"/>
<circle cx="265" cy="316" r="1.3" fill="#0c0f14" opacity="0.6"/>
<circle cx="177" cy="541" r="1.6" fill="#0c0f14" opacity="0.6"/>
<circle cx="367" cy="513" r="1.5" fill="#0c0f14" opacity="0.6"/>
<circle cx="457" cy="589" r="1.7" fill="#0c0f14" opacity="0.6"/>
<circle cx="302" cy="295" r="1.3" fill="#0c0f14" opacity="0.6"/>
<circle cx="358" cy="608" r="1.3" fill="#0c0f14" opacity="0.6"/>
<circle cx="273" cy="292" r="1.5" fill="#0c0f14" opacity="0.6"/>
<circle cx="354" cy="653" r="1.3" fill="#0c0f14" opacity="0.6"/>
<circle cx="424" cy="574" r="1.7" fill="#0c0f14" opacity="0.6"/>
<circle cx="303" cy="620" r="1.0" fill="#0c0f14" opacity="0.6"/>
<circle cx="163" cy="410" r="1.0" fill="#0c0f14" opacity="0.6"/>
<circle cx="468" cy="435" r="0.9" fill="#0c0f14" opacity="0.6"/>
<circle cx="374" cy="326" r="0.9" fill="#0c0f14" opacity="0.6"/>
<circle cx="282" cy="336" r="1.3" fill="#0c0f14" opacity="0.6"/>
<circle cx="291" cy="585" r="1.0" fill="#0c0f14" opacity="0.6"/>
<circle cx="463" cy="362" r="1.2" fill="#0c0f14" opacity="0.6"/>
<circle cx="230" cy="295" r="0.9" fill="#0c0f14" opacity="0.6"/>
<circle cx="438" cy="397" r="1.1" fill="#0c0f14" opacity="0.6"/>
<circle cx="322" cy="388" r="1.2" fill="#0c0f14" opacity="0.6"/>
<circle cx="180" cy="419" r="0.9" fill="#0c0f14" opacity="0.6"/>
<circle cx="413" cy="573" r="1.4" fill="#0c0f14" opacity="0.6"/>
<circle cx="344" cy="609" r="1.4" fill="#0c0f14" opacity="0.6"/>
<circle cx="177" cy="338" r="1.4" fill="#0c0f14" opacity="0.6"/>
<circle cx="420" cy="654" r="1.5" fill="#0c0f14" opacity="0.6"/>
<circle cx="209" cy="499" r="1.3" fill="#0c0f14" opacity="0.6"/>
<circle cx="347" cy="339" r="1.7" fill="#0c0f14" opacity="0.6"/>
<circle cx="318" cy="389" r="1.7" fill="#0c0f14" opacity="0.6"/>
<circle cx="279" cy="316" r="1.3" fill="#0c0f14" opacity="0.6"/>
<circle cx="241" cy="370" r="0.9" fill="#0c0f14" opacity="0.6"/>
<circle cx="348" cy="408" r="1.3" fill="#0c0f14" opacity="0.6"/>
<circle cx="441" cy="655" r="1.6" fill="#0c0f14" opacity="0.6"/>
<circle cx="446" cy="383" r="1.5" fill="#0c0f14" opacity="0.6"/>
<circle cx="188" cy="504" r="0.7" fill="#0c0f14" opacity="0.6"/>
<circle cx="191" cy="639" r="0.7" fill="#0c0f14" opacity="0.6"/>
<circle cx="382" cy="484" r="0.6" fill="#0c0f14" opacity="0.6"/>
<circle cx="406" cy="312" r="1.6" fill="#0c0f14" opacity="0.6"/>
<circle cx="414" cy="473" r="1.1" fill="#0c0f14" opacity="0.6"/>
<circle cx="169" cy="548" r="0.6" fill="#0c0f14" opacity="0.6"/>
<circle cx="323" cy="631" r="1.3" fill="#0c0f14" opacity="0.6"/>
<circle cx="196" cy="555" r="1.4" fill="#0c0f14" opacity="0.6"/>
<circle cx="262" cy="574" r="1.2" fill="#0c0f14" opacity="0.6"/>
<circle cx="288" cy="483" r="0.9" fill="#0c0f14" opacity="0.6"/>
<circle cx="249" cy="617" r="1.0" fill="#0c0f14" opacity="0.6"/>
<circle cx="399" cy="425" r="0.8" fill="#0c0f14" opacity="0.6"/>
<circle cx="160" cy="645" r="1.4" fill="#0c0f14" opacity="0.6"/>
<circle cx="464" cy="507" r="0.7" fill="#0c0f14" opacity="0.6"/>
<circle cx="211" cy="308" r="1.3" fill="#0c0f14" opacity="0.6"/>
<circle cx="353" cy="642" r="0.9" fill="#0c0f14" opacity="0.6"/>
<circle cx="232" cy="371" r="0.8" fill="#0c0f14" opacity="0.6"/>
<circle cx="169" cy="472" r="1.1" fill="#0c0f14" opacity="0.6"/>
<circle cx="274" cy="640" r="0.9" fill="#0c0f14" opacity="0.6"/>
<circle cx="416" cy="486" r="0.7" fill="#0c0f14" opacity="0.6"/>
<circle cx="169" cy="514" r="1.6" fill="#0c0f14" opacity="0.6"/>
<circle cx="176" cy="548" r="0.9" fill="#0c0f14" opacity="0.6"/>
<circle cx="373" cy="597" r="1.4" fill="#0c0f14" opacity="0.6"/>
<circle cx="236" cy="347" r="1.7" fill="#0c0f14" opacity="0.6"/>
<circle cx="444" cy="630" r="1.2" fill="#0c0f14" opacity="0.6"/>
<circle cx="176" cy="426" r="1.6" fill="#0c0f14" opacity="0.6"/>
<circle cx="181" cy="399" r="0.6" fill="#0c0f14" opacity="0.6"/>
<circle cx="433" cy="420" r="0.7" fill="#0c0f14" opacity="0.6"/>
<circle cx="270" cy="365" r="1.1" fill="#0c0f14" opacity="0.6"/>
<circle cx="351" cy="532" r="0.7" fill="#0c0f14" opacity="0.6"/>
<circle cx="326" cy="311" r="1.1" fill="#0c0f14" opacity="0.6"/>
<circle cx="410" cy="387" r="1.5" fill="#0c0f14" opacity="0.6"/>
<circle cx="236" cy="435" r="1.5" fill="#0c0f14" opacity="0.6"/>
<circle cx="161" cy="494" r="1.2" fill="#0c0f14" opacity="0.6"/>
<circle cx="382" cy="639" r="1.4" fill="#0c0f14" opacity="0.6"/>
<circle cx="229" cy="363" r="1.1" fill="#0c0f14" opacity="0.6"/>
<circle cx="247" cy="494" r="0.7" fill="#0c0f14" opacity="0.6"/>
<circle cx="375" cy="443" r="0.7" fill="#0c0f14" opacity="0.6"/>
<circle cx="197" cy="634" r="1.5" fill="#0c0f14" opacity="0.6"/>
<circle cx="433" cy="433" r="1.7" fill="#0c0f14" opacity="0.6"/>
<circle cx="213" cy="557" r="1.6" fill="#0c0f14" opacity="0.6"/>
<circle cx="225" cy="292" r="0.7" fill="#0c0f14" opacity="0.6"/>
<circle cx="186" cy="586" r="1.3" fill="#0c0f14" opacity="0.6"/>
<circle cx="308" cy="332" r="1.3" fill="#0c0f14" opacity="0.6"/>
<circle cx="202" cy="339" r="1.3" fill="#0c0f14" opacity="0.6"/>
<circle cx="359" cy="585" r="1.5" fill="#0c0f14" opacity="0.6"/>
<circle cx="203" cy="402" r="0.8" fill="#0c0f14" opacity="0.6"/>
<circle cx="312" cy="300" r="1.6" fill="#0c0f14" opacity="0.6"/>
<circle cx="371" cy="588" r="1.1" fill="#0c0f14" opacity="0.6"/>
<circle cx="443" cy="597" r="1.5" fill="#0c0f14" opacity="0.6"/>
<circle cx="410" cy="369" r="1.0" fill="#0c0f14" opacity="0.6"/>
<circle cx="177" cy="571" r="1.1" fill="#0c0f14" opacity="0.6"/>
<circle cx="466" cy="397" r="1.1" fill="#0c0f14" opacity="0.6"/>
<circle cx="429" cy="647" r="1.4" fill="#0c0f14" opacity="0.6"/>
<circle cx="434" cy="630" r="0.9" fill="#0c0f14" opacity="0.6"/>
<circle cx="351" cy="313" r="1.3" fill="#0c0f14" opacity="0.6"/>
<circle cx="455" cy="476" r="0.8" fill="#0c0f14" opacity="0.6"/>
<circle cx="336" cy="314" r="1.1" fill="#0c0f14" opacity="0.6"/>
<circle cx="185" cy="444" r="1.5" fill="#0c0f14" opacity="0.6"/>
<circle cx="389" cy="604" r="1.1" fill="#0c0f14" opacity="0.6"/>
<circle cx="297" cy="310" r="1.5" fill="#0c0f14" opacity="0.6"/>
<circle cx="337" cy="440" r="0.8" fill="#0c0f14" opacity="0.6"/>
<circle cx="302" cy="313" r="0.7" fill="#0c0f14" opacity="0.6"/>
<circle cx="185" cy="446" r="0.8" fill="#0c0f14" opacity="0.6"/>
<circle cx="416" cy="514" r="1.6" fill="#0c0f14" opacity="0.6"/>
<circle cx="332" cy="349" r="0.9" fill="#0c0f14" opacity="0.6"/>
<circle cx="420" cy="505" r="1.3" fill="#0c0f14" opacity="0.6"/>
<circle cx="356" cy="308" r="0.8" fill="#0c0f14" opacity="0.6"/>
<circle cx="294" cy="601" r="1.6" fill="#0c0f14" opacity="0.6"/>
<circle cx="343" cy="385" r="0.7" fill="#0c0f14" opacity="0.6"/>
<circle cx="333" cy="441" r="1.6" fill="#0c0f14" opacity="0.6"/>
<circle cx="224" cy="365" r="0.6" fill="#0c0f14" opacity="0.6"/>
<circle cx="169" cy="587" r="1.6" fill="#0c0f14" opacity="0.6"/>
<circle cx="208" cy="296" r="1.2" fill="#0c0f14" opacity="0.6"/>
<circle cx="236" cy="516" r="1.6" fill="#0c0f14" opacity="0.6"/>
<circle cx="392" cy="393" r="1.3" fill="#0c0f14" opacity="0.6"/>
<circle cx="250" cy="570" r="0.9" fill="#0c0f14" opacity="0.6"/>
<circle cx="430" cy="540" r="1.6" fill="#0c0f14" opacity="0.6"/>
<circle cx="267" cy="641" r="1.2" fill="#0c0f14" opacity="0.6"/>
<circle cx="240" cy="528" r="0.9" fill="#0c0f14" opacity="0.6"/>
<circle cx="195" cy="305" r="1.3" fill="#0c0f14" opacity="0.6"/>
<circle cx="235" cy="327" r="1.5" fill="#0c0f14" opacity="0.6"/>
<circle cx="204" cy="568" r="0.9" fill="#0c0f14" opacity="0.6"/>
<circle cx="273" cy="633" r="1.5" fill="#0c0f14" opacity="0.6"/>
<circle cx="419" cy="651" r="1.3" fill="#0c0f14" opacity="0.6"/>
<circle cx="450" cy="519" r="1.2" fill="#0c0f14" opacity="0.6"/>
<circle cx="260" cy="430" r="1.2" fill="#0c0f14" opacity="0.6"/>
<circle cx="237" cy="526" r="1.6" fill="#0c0f14" opacity="0.6"/>
<circle cx="383" cy="373" r="0.6" fill="#0c0f14" opacity="0.6"/>
<circle cx="274" cy="450" r="1.5" fill="#0c0f14" opacity="0.6"/>
<circle cx="330" cy="481" r="1.3" fill="#0c0f14" opacity="0.6"/>
<circle cx="331" cy="540" r="1.2" fill="#0c0f14" opacity="0.6"/>
<circle cx="331" cy="377" r="0.7" fill="#0c0f14" opacity="0.6"/>
<circle cx="296" cy="616" r="1.6" fill="#0c0f14" opacity="0.6"/>
<circle cx="251" cy="501" r="1.2" fill="#0c0f14" opacity="0.6"/>
<circle cx="301" cy="356" r="1.5" fill="#0c0f14" opacity="0.6"/>
<circle cx="186" cy="374" r="0.9" fill="#0c0f14" opacity="0.6"/>
<circle cx="223" cy="361" r="0.7" fill="#0c0f14" opacity="0.6"/>
<circle cx="322" cy="353" r="1.3" fill="#0c0f14" opacity="0.6"/>
<circle cx="346" cy="520" r="1.1" fill="#0c0f14" opacity="0.6"/>
<circle cx="350" cy="399" r="1.1" fill="#0c0f14" opacity="0.6"/>
<circle cx="373" cy="369" r="1.4" fill="#0c0f14" opacity="0.6"/>
<circle cx="341" cy="649" r="1.3" fill="#0c0f14" opacity="0.6"/>
<circle cx="330" cy="573" r="0.9" fill="#0c0f14" opacity="0.6"/>
<circle cx="275" cy="449" r="1.4" fill="#0c0f14" opacity="0.6"/>
<circle cx="383" cy="358" r="1.6" fill="#0c0f14" opacity="0.6"/>
<circle cx="464" cy="472" r="1.7" fill="#0c0f14" opacity="0.6"/>
<circle cx="353" cy="432" r="0.7" fill="#0c0f14" opacity="0.6"/>
<circle cx="165" cy="508" r="1.4" fill="#0c0f14" opacity="0.6"/>
<circle cx="351" cy="578" r="1.1" fill="#0c0f14" opacity="0.6"/>
<circle cx="390" cy="512" r="1.3" fill="#0c0f14" opacity="0.6"/>
<circle cx="330" cy="535" r="1.2" fill="#0c0f14" opacity="0.6"/>
<circle cx="188" cy="538" r="1.4" fill="#0c0f14" opacity="0.6"/>
<circle cx="293" cy="647" r="1.1" fill="#0c0f14" opacity="0.6"/>
<circle cx="212" cy="478" r="1.0" fill="#0c0f14" opacity="0.6"/>
<circle cx="211" cy="617" r="0.8" fill="#0c0f14" opacity="0.6"/>
<circle cx="381" cy="353" r="1.2" fill="#0c0f14" opacity="0.6"/>
<circle cx="469" cy="323" r="1.5" fill="#0c0f14" opacity="0.6"/>
<circle cx="162" cy="650" r="1.6" fill="#0c0f14" opacity="0.6"/>
<circle cx="299" cy="525" r="1.1" fill="#0c0f14" opacity="0.6"/>
<circle cx="211" cy="421" r="1.1" fill="#0c0f14" opacity="0.6"/>
<circle cx="430" cy="332" r="1.2" fill="#0c0f14" opacity="0.6"/>
<circle cx="306" cy="493" r="1.5" fill="#0c0f14" opacity="0.6"/>
<circle cx="346" cy="409" r="1.7" fill="#0c0f14" opacity="0.6"/>
<circle cx="346" cy="390" r="1.2" fill="#0c0f14" opacity="0.6"/>
<circle cx="429" cy="307" r="1.3" fill="#0c0f14" opacity="0.6"/>
<circle cx="311" cy="396" r="0.8" fill="#0c0f14" opacity="0.6"/>
<circle cx="232" cy="451" r="1.1" fill="#0c0f14" opacity="0.6"/>
<circle cx="346" cy="389" r="1.3" fill="#0c0f14" opacity="0.6"/>
<circle cx="307" cy="583" r="1.5" fill="#0c0f14" opacity="0.6"/>
<circle cx="234" cy="649" r="1.2" fill="#0c0f14" opacity="0.6"/>
<circle cx="264" cy="384" r="1.4" fill="#0c0f14" opacity="0.6"/>
<circle cx="295" cy="542" r="0.9" fill="#0c0f14" opacity="0.6"/>
<circle cx="427" cy="387" r="1.6" fill="#0c0f14" opacity="0.6"/>
<circle cx="296" cy="438" r="1.2" fill="#0c0f14" opacity="0.6"/>
<circle cx="322" cy="492" r="1.2" fill="#0c0f14" opacity="0.6"/>
<circle cx="454" cy="563" r="0.7" fill="#0c0f14" opacity="0.6"/>
<circle cx="466" cy="296" r="0.7" fill="#0c0f14" opacity="0.6"/>
<circle cx="414" cy="391" r="0.6" fill="#0c0f14" opacity="0.6"/>
<circle cx="215" cy="472" r="1.5" fill="#0c0f14" opacity="0.6"/>
<circle cx="166" cy="351" r="0.6" fill="#0c0f14" opacity="0.6"/>
<circle cx="177" cy="406" r="1.1" fill="#0c0f14" opacity="0.6"/>
<circle cx="460" cy="529" r="1.5" fill="#0c0f14" opacity="0.6"/>
<circle cx="343" cy="625" r="1.3" fill="#0c0f14" opacity="0.6"/>
<circle cx="234" cy="427" r="1.1" fill="#0c0f14" opacity="0.6"/>
<circle cx="194" cy="630" r="1.1" fill="#0c0f14" opacity="0.6"/>
<circle cx="222" cy="471" r="1.5" fill="#0c0f14" opacity="0.6"/>
<circle cx="245" cy="506" r="0.7" fill="#0c0f14" opacity="0.6"/>
<circle cx="235" cy="359" r="1.2" fill="#0c0f14" opacity="0.6"/>
<circle cx="373" cy="374" r="1.4" fill="#0c0f14" opacity="0.6"/>
<circle cx="342" cy="566" r="1.7" fill="#0c0f14" opacity="0.6"/>
<circle cx="263" cy="657" r="1.1" fill="#0c0f14" opacity="0.6"/>
<circle cx="318" cy="355" r="0.7" fill="#0c0f14" opacity="0.6"/>
<circle cx="360" cy="328" r="0.6" fill="#0c0f14" opacity="0.6"/>
<circle cx="186" cy="490" r="0.8" fill="#0c0f14" opacity="0.6"/>
<circle cx="242" cy="572" r="1.1" fill="#0c0f14" opacity="0.6"/>
<circle cx="206" cy="540" r="1.7" fill="#0c0f14" opacity="0.6"/>
<circle cx="353" cy="454" r="1.2" fill="#0c0f14" opacity="0.6"/>
<circle cx="378" cy="598" r="1.5" fill="#0c0f14" opacity="0.6"/>
<circle cx="237" cy="577" r="0.7" fill="#0c0f14" opacity="0.6"/>
<circle cx="200" cy="477" r="0.8" fill="#0c0f14" opacity="0.6"/>
<circle cx="334" cy="394" r="1.6" fill="#0c0f14" opacity="0.6"/>
<circle cx="294" cy="590" r="1.6" fill="#0c0f14" opacity="0.6"/>
<circle cx="300" cy="573" r="1.1" fill="#0c0f14" opacity="0.6"/>
<circle cx="284" cy="336" r="1.3" fill="#0c0f14" opacity="0.6"/>
<circle cx="446" cy="543" r="0.9" fill="#0c0f14" opacity="0.6"/>
<circle cx="323" cy="421" r="1.0" fill="#0c0f14" opacity="0.6"/>
<circle cx="400" cy="292" r="1.1" fill="#0c0f14" opacity="0.6"/>
<circle cx="319" cy="344" r="1.4" fill="#0c0f14" opacity="0.6"/>
<circle cx="239" cy="438" r="0.9" fill="#0c0f14" opacity="0.6"/>
<circle cx="345" cy="449" r="1.4" fill="#0c0f14" opacity="0.6"/>
<circle cx="292" cy="578" r="1.2" fill="#0c0f14" opacity="0.6"/>
<circle cx="193" cy="471" r="0.9" fill="#0c0f14" opacity="0.6"/>
<circle cx="252" cy="639" r="1.1" fill="#0c0f14" opacity="0.6"/>
<circle cx="389" cy="347" r="1.3" fill="#0c0f14" opacity="0.6"/>
<circle cx="197" cy="372" r="0.7" fill="#0c0f14" opacity="0.6"/>
<circle cx="168" cy="624" r="1.7" fill="#0c0f14" opacity="0.6"/>
<circle cx="274" cy="295" r="1.4" fill="#0c0f14" opacity="0.6"/>
<circle cx="365" cy="307" r="1.4" fill="#0c0f14" opacity="0.6"/>
<circle cx="181" cy="376" r="1.5" fill="#0c0f14" opacity="0.6"/>
<circle cx="398" cy="376" r="1.2" fill="#0c0f14" opacity="0.6"/>
<circle cx="408" cy="512" r="1.2" fill="#0c0f14" opacity="0.6"/>
<circle cx="217" cy="315" r="0.8" fill="#0c0f14" opacity="0.6"/>
<circle cx="323" cy="509" r="1.1" fill="#0c0f14" opacity="0.6"/>
<circle cx="357" cy="498" r="1.3" fill="#0c0f14" opacity="0.6"/>
<circle cx="287" cy="600" r="1.2" fill="#0c0f14" opacity="0.6"/>
<circle cx="433" cy="653" r="1.5" fill="#0c0f14" opacity="0.6"/>
<circle cx="399" cy="544" r="1.2" fill="#0c0f14" opacity="0.6"/>
<circle cx="237" cy="328" r="1.3" fill="#0c0f14" opacity="0.6"/>
<circle cx="237" cy="515" r="1.2" fill="#0c0f14" opacity="0.6"/>
<circle cx="348" cy="448" r="0.9" fill="#0c0f14" opacity="0.6"/>
<circle cx="254" cy="546" r="1.6" fill="#0c0f14" opacity="0.6"/>
<circle cx="259" cy="405" r="1.1" fill="#0c0f14" opacity="0.6"/>
<circle cx="293" cy="523" r="1.4" fill="#0c0f14" opacity="0.6"/>
<circle cx="398" cy="588" r="1.4" fill="#0c0f14" opacity="0.6"/>
<circle cx="461" cy="455" r="1.1" fill="#0c0f14" opacity="0.6"/>
<circle cx="362" cy="406" r="1.5" fill="#0c0f14" opacity="0.6"/>
<circle cx="290" cy="495" r="1.2" fill="#0c0f14" opacity="0.6"/>
<circle cx="273" cy="294" r="0.9" fill="#0c0f14" opacity="0.6"/>
<circle cx="308" cy="640" r="0.8" fill="#0c0f14" opacity="0.6"/>
<circle cx="440" cy="648" r="1.5" fill="#0c0f14" opacity="0.6"/>
<circle cx="247" cy="297" r="1.6" fill="#0c0f14" opacity="0.6"/>
<circle cx="181" cy="400" r="1.6" fill="#0c0f14" opacity="0.6"/>
<circle cx="369" cy="593" r="1.5" fill="#0c0f14" opacity="0.6"/>
<circle cx="215" cy="476" r="0.7" fill="#0c0f14" opacity="0.6"/>
<circle cx="277" cy="472" r="1.5" fill="#0c0f14" opacity="0.6"/>
<circle cx="250" cy="535" r="0.8" fill="#0c0f14" opacity="0.6"/>
<circle cx="240" cy="312" r="1.2" fill="#0c0f14" opacity="0.6"/>
<circle cx="342" cy="552" r="1.1" fill="#0c0f14" opacity="0.6"/>
<circle cx="450" cy="556" r="1.2" fill="#0c0f14" opacity="0.6"/>
<circle cx="431" cy="356" r="0.9" fill="#0c0f14" opacity="0.6"/>
<circle cx="331" cy="511" r="1.7" fill="#0c0f14" opacity="0.6"/>
<circle cx="371" cy="307" r="1.6" fill="#0c0f14" opacity="0.6"/>
<circle cx="305" cy="366" r="1.4" fill="#0c0f14" opacity="0.6"/>
<circle cx="355" cy="605" r="1.2" fill="#0c0f14" opacity="0.6"/>
<circle cx="239" cy="463" r="1.1" fill="#0c0f14" opacity="0.6"/>
<circle cx="269" cy="504" r="0.8" fill="#0c0f14" opacity="0.6"/>
<circle cx="238" cy="334" r="0.6" fill="#0c0f14" opacity="0.6"/>
<circle cx="323" cy="561" r="1.0" fill="#0c0f14" opacity="0.6"/>
<circle cx="440" cy="514" r="1.3" fill="#0c0f14" opacity="0.6"/>
<circle cx="249" cy="621" r="1.0" fill="#0c0f14" opacity="0.6"/>
<circle cx="422" cy="380" r="1.6" fill="#0c0f14" opacity="0.6"/>
<circle cx="372" cy="356" r="1.4" fill="#0c0f14" opacity="0.6"/>
<circle cx="208" cy="432" r="1.0" fill="#0c0f14" opacity="0.6"/>
<circle cx="264" cy="423" r="0.8" fill="#0c0f14" opacity="0.6"/>
<circle cx="284" cy="324" r="1.5" fill="#0c0f14" opacity="0.6"/>
<circle cx="270" cy="552" r="1.1" fill="#0c0f14" opacity="0.6"/>
<circle cx="462" cy="614" r="1.4" fill="#0c0f14" opacity="0.6"/>
<circle cx="421" cy="626" r="1.6" fill="#0c0f14" opacity="0.6"/>
<circle cx="288" cy="508" r="0.7" fill="#0c0f14" opacity="0.6"/>
<circle cx="273" cy="411" r="1.3" fill="#0c0f14" opacity="0.6"/>
<circle cx="162" cy="568" r="0.7" fill="#0c0f14" opacity="0.6"/>
<circle cx="291" cy="468" r="1.5" fill="#0c0f14" opacity="0.6"/>
<circle cx="356" cy="344" r="1.3" fill="#0c0f14" opacity="0.6"/>
<circle cx="233" cy="517" r="1.1" fill="#0c0f14" opacity="0.6"/>
<circle cx="456" cy="455" r="0.9" fill="#0c0f14" opacity="0.6"/>
<circle cx="256" cy="642" r="1.0" fill="#0c0f14" opacity="0.6"/>
<circle cx="235" cy="487" r="1.3" fill="#0c0f14" opacity="0.6"/>
<circle cx="452" cy="319" r="1.0" fill="#0c0f14" opacity="0.6"/>
<circle cx="384" cy="472" r="1.4" fill="#0c0f14" opacity="0.6"/>
<circle cx="369" cy="324" r="0.7" fill="#0c0f14" opacity="0.6"/>
<circle cx="215" cy="402" r="0.8" fill="#0c0f14" opacity="0.6"/>
<circle cx="249" cy="332" r="0.6" fill="#0c0f14" opacity="0.6"/>
<circle cx="323" cy="569" r="0.8" fill="#0c0f14" opacity="0.6"/>
<circle cx="189" cy="558" r="0.7" fill="#0c0f14" opacity="0.6"/>
<circle cx="203" cy="471" r="0.9" fill="#0c0f14" opacity="0.6"/>
<circle cx="403" cy="476" r="1.2" fill="#0c0f14" opacity="0.6"/>
<circle cx="276" cy="300" r="1.5" fill="#0c0f14" opacity="0.6"/>
<circle cx="281" cy="594" r="0.7" fill="#0c0f14" opacity="0.6"/>
<circle cx="294" cy="489" r="0.8" fill="#0c0f14" opacity="0.6"/>
<circle cx="183" cy="634" r="1.6" fill="#0c0f14" opacity="0.6"/>
<circle cx="470" cy="490" r="1.4" fill="#0c0f14" opacity="0.6"/>
<circle cx="346" cy="466" r="0.8" fill="#0c0f14" opacity="0.6"/>
<circle cx="359" cy="453" r="1.3" fill="#0c0f14" opacity="0.6"/>
<circle cx="173" cy="398" r="0.7" fill="#0c0f14" opacity="0.6"/>
<circle cx="397" cy="466" r="0.9" fill="#0c0f14" opacity="0.6"/>
<circle cx="402" cy="482" r="0.9" fill="#0c0f14" opacity="0.6"/>
<circle cx="282" cy="291" r="0.7" fill="#0c0f14" opacity="0.6"/>
<circle cx="171" cy="644" r="1.6" fill="#0c0f14" opacity="0.6"/>
<circle cx="329" cy="636" r="1.2" fill="#0c0f14" opacity="0.6"/>
<circle cx="371" cy="329" r="1.1" fill="#0c0f14" opacity="0.6"/>
<circle cx="349" cy="441" r="1.3" fill="#0c0f14" opacity="0.6"/>
<circle cx="266" cy="531" r="0.8" fill="#0c0f14" opacity="0.6"/>
<circle cx="312" cy="447" r="1.2" fill="#0c0f14" opacity="0.6"/>
<circle cx="177" cy="379" r="1.4" fill="#0c0f14" opacity="0.6"/>
<circle cx="211" cy="465" r="1.7" fill="#0c0f14" opacity="0.6"/>
<circle cx="349" cy="560" r="1.4" fill="#0c0f14" opacity="0.6"/>
<circle cx="460" cy="433" r="1.0" fill="#0c0f14" opacity="0.6"/>
<circle cx="394" cy="299" r="1.1" fill="#0c0f14" opacity="0.6"/>
<circle cx="244" cy="495" r="1.4" fill="#0c0f14" opacity="0.6"/>
<circle cx="427" cy="477" r="1.4" fill="#0c0f14" opacity="0.6"/>
<circle cx="185" cy="533" r="1.6" fill="#0c0f14" opacity="0.6"/>
<circle cx="351" cy="470" r="1.2" fill="#0c0f14" opacity="0.6"/>
<circle cx="288" cy="356" r="0.8" fill="#0c0f14" opacity="0.6"/>
<circle cx="406" cy="480" r="0.6" fill="#0c0f14" opacity="0.6"/>
<circle cx="351" cy="596" r="1.3" fill="#0c0f14" opacity="0.6"/>
<circle cx="216" cy="640" r="0.8" fill="#0c0f14" opacity="0.6"/>
<circle cx="318" cy="459" r="0.8" fill="#0c0f14" opacity="0.6"/>
<circle cx="243" cy="359" r="0.8" fill="#0c0f14" opacity="0.6"/>
<circle cx="173" cy="528" r="1.3" fill="#0c0f14" opacity="0.6"/>
<circle cx="238" cy="640" r="1.1" fill="#0c0f14" opacity="0.6"/>
<circle cx="301" cy="631" r="1.3" fill="#0c0f14" opacity="0.6"/>
<circle cx="304" cy="565" r="1.4" fill="#0c0f14" opacity="0.6"/>
<circle cx="256" cy="316" r="1.4" fill="#0c0f14" opacity="0.6"/>
<circle cx="392" cy="511" r="0.7" fill="#0c0f14" opacity="0.6"/>
<circle cx="391" cy="355" r="1.5" fill="#0c0f14" opacity="0.6"/>
<circle cx="353" cy="524" r="0.7" fill="#0c0f14" opacity="0.6"/>
<circle cx="273" cy="560" r="0.7" fill="#0c0f14" opacity="0.6"/>
<circle cx="172" cy="442" r="1.5" fill="#0c0f14" opacity="0.6"/>
<circle cx="355" cy="375" r="0.7" fill="#0c0f14" opacity="0.6"/>
<circle cx="419" cy="600" r="1.4" fill="#0c0f14" opacity="0.6"/>
<circle cx="224" cy="566" r="0.6" fill="#0c0f14" opacity="0.6"/>
<circle cx="213" cy="408" r="1.7" fill="#0c0f14" opacity="0.6"/>
<circle cx="171" cy="349" r="1.4" fill="#0c0f14" opacity="0.6"/>
<circle cx="396" cy="389" r="0.7" fill="#0c0f14" opacity="0.6"/>
<circle cx="425" cy="647" r="1.6" fill="#0c0f14" opacity="0.6"/>
<circle cx="335" cy="321" r="1.4" fill="#0c0f14" opacity="0.6"/>
<circle cx="361" cy="596" r="1.4" fill="#0c0f14" opacity="0.6"/>
<circle cx="316" cy="649" r="1.1" fill="#0c0f14" opacity="0.6"/>
<circle cx="298" cy="525" r="1.5" fill="#0c0f14" opacity="0.6"/>
<circle cx="342" cy="636" r="0.9" fill="#0c0f14" opacity="0.6"/>
<circle cx="438" cy="613" r="1.0" fill="#0c0f14" opacity="0.6"/>
<circle cx="169" cy="511" r="1.3" fill="#0c0f14" opacity="0.6"/>
<circle cx="458" cy="495" r="1.4" fill="#0c0f14" opacity="0.6"/>
<circle cx="395" cy="352" r="1.3" fill="#0c0f14" opacity="0.6"/>
<circle cx="296" cy="370" r="0.9" fill="#0c0f14" opacity="0.6"/>
<circle cx="272" cy="560" r="1.2" fill="#0c0f14" opacity="0.6"/>
<circle cx="259" cy="310" r="1.5" fill="#0c0f14" opacity="0.6"/>
<circle cx="394" cy="598" r="1.5" fill="#0c0f14" opacity="0.6"/>
<circle cx="180" cy="393" r="1.1" fill="#0c0f14" opacity="0.6"/>
<circle cx="252" cy="593" r="0.8" fill="#0c0f14" opacity="0.6"/>
<circle cx="165" cy="456" r="0.7" fill="#0c0f14" opacity="0.6"/>
<circle cx="169" cy="513" r="1.3" fill="#0c0f14" opacity="0.6"/>
<circle cx="328" cy="316" r="1.2" fill="#0c0f14" opacity="0.6"/>
<circle cx="322" cy="402" r="0.8" fill="#0c0f14" opacity="0.6"/>
<circle cx="208" cy="468" r="1.0" fill="#0c0f14" opacity="0.6"/>
<circle cx="341" cy="538" r="0.9" fill="#0c0f14" opacity="0.6"/>
<circle cx="348" cy="385" r="1.4" fill="#0c0f14" opacity="0.6"/>
<circle cx="223" cy="509" r="1.4" fill="#0c0f14" opacity="0.6"/>
<circle cx="408" cy="485" r="1.6" fill="#0c0f14" opacity="0.6"/>
<circle cx="466" cy="582" r="1.0" fill="#0c0f14" opacity="0.6"/>
<circle cx="243" cy="521" r="0.7" fill="#0c0f14" opacity="0.6"/>
<circle cx="215" cy="325" r="1.3" fill="#0c0f14" opacity="0.6"/>
<circle cx="280" cy="629" r="1.5" fill="#0c0f14" opacity="0.6"/>
<circle cx="325" cy="415" r="1.0" fill="#0c0f14" opacity="0.6"/>
<circle cx="176" cy="331" r="1.6" fill="#0c0f14" opacity="0.6"/>
<circle cx="252" cy="293" r="1.7" fill="#0c0f14" opacity="0.6"/>
<circle cx="278" cy="575" r="1.1" fill="#0c0f14" opacity="0.6"/>
<circle cx="460" cy="320" r="1.1" fill="#0c0f14" opacity="0.6"/>
<circle cx="361" cy="299" r="1.6" fill="#0c0f14" opacity="0.6"/>
<circle cx="265" cy="539" r="0.7" fill="#0c0f14" opacity="0.6"/>
<circle cx="184" cy="322" r="1.5" fill="#0c0f14" opacity="0.6"/>
<circle cx="452" cy="627" r="1.2" fill="#0c0f14" opacity="0.6"/>
<circle cx="188" cy="576" r="1.2" fill="#0c0f14" opacity="0.6"/>
<circle cx="403" cy="523" r="1.2" fill="#0c0f14" opacity="0.6"/>
<circle cx="213" cy="343" r="0.7" fill="#0c0f14" opacity="0.6"/>
<circle cx="294" cy="396" r="1.6" fill="#0c0f14" opacity="0.6"/>
<circle cx="175" cy="569" r="0.7" fill="#0c0f14" opacity="0.6"/>
<circle cx="192" cy="630" r="0.8" fill="#0c0f14" opacity="0.6"/>
<circle cx="344" cy="505" r="1.0" fill="#0c0f14" opacity="0.6"/>
<circle cx="268" cy="342" r="1.4" fill="#0c0f14" opacity="0.6"/>
<circle cx="275" cy="511" r="1.5" fill="#0c0f14" opacity="0.6"/>
</g>
<g filter="url(#b07)">
<polygon points="382.4,289.2 386.0,290.2 494.7,867.9 477.1,860.0" fill="#8e9aa6" opacity="0.7"/>
<polyline points="386.0,290.2 494.7,867.9" fill="none" stroke="#c3ccd4" stroke-width="2" opacity="0.9"/>
<polyline points="382.4,289.2 477.1,860.0" fill="none" stroke="#d0d8df" stroke-width="1.3" opacity="0.8"/>
<polyline points="21.1,240.1 114.5,212.2 386.0,290.2" fill="none" stroke="#b4bfc9" stroke-width="1.4" opacity="0.8"/>
<polygon points="0,553 480,755 480,762 0,560" fill="#8d99a5" opacity="0.75"/>
<polyline points="0,553 480,754" fill="none" stroke="#c0c9d1" stroke-width="2" opacity="0.7"/>
</g>
<polygon points="-10,556 480,761 480,700 -10,700" fill="#141922"/>
<g filter="url(#b15)">
<ellipse cx="18" cy="613" rx="5" ry="3" fill="#262c36" opacity="0.6"/>
<ellipse cx="149" cy="595" rx="6" ry="1" fill="#262c36" opacity="0.6"/>
<ellipse cx="123" cy="585" rx="4" ry="2" fill="#262c36" opacity="0.6"/>
<ellipse cx="129" cy="597" rx="7" ry="2" fill="#262c36" opacity="0.6"/>
<ellipse cx="169" cy="584" rx="9" ry="2" fill="#262c36" opacity="0.6"/>
<ellipse cx="41" cy="603" rx="7" ry="1" fill="#262c36" opacity="0.6"/>
<ellipse cx="219" cy="597" rx="6" ry="1" fill="#262c36" opacity="0.6"/>
<ellipse cx="109" cy="655" rx="4" ry="1" fill="#262c36" opacity="0.6"/>
<ellipse cx="131" cy="630" rx="4" ry="1" fill="#262c36" opacity="0.6"/>
<ellipse cx="145" cy="599" rx="3" ry="2" fill="#262c36" opacity="0.6"/>
<ellipse cx="208" cy="643" rx="9" ry="1" fill="#262c36" opacity="0.6"/>
<ellipse cx="74" cy="627" rx="7" ry="2" fill="#262c36" opacity="0.6"/>
<ellipse cx="133" cy="598" rx="5" ry="1" fill="#262c36" opacity="0.6"/>
<ellipse cx="14" cy="625" rx="4" ry="3" fill="#262c36" opacity="0.6"/>
<ellipse cx="230" cy="591" rx="10" ry="2" fill="#262c36" opacity="0.6"/>
<ellipse cx="1" cy="610" rx="6" ry="2" fill="#262c36" opacity="0.6"/>
<ellipse cx="16" cy="599" rx="3" ry="2" fill="#262c36" opacity="0.6"/>
<ellipse cx="116" cy="598" rx="9" ry="3" fill="#262c36" opacity="0.6"/>
<ellipse cx="120" cy="643" rx="5" ry="3" fill="#262c36" opacity="0.6"/>
<ellipse cx="187" cy="607" rx="8" ry="2" fill="#262c36" opacity="0.6"/>
<ellipse cx="42" cy="613" rx="4" ry="2" fill="#262c36" opacity="0.6"/>
<ellipse cx="60" cy="619" rx="9" ry="2" fill="#262c36" opacity="0.6"/>
<ellipse cx="218" cy="637" rx="8" ry="2" fill="#262c36" opacity="0.6"/>
<ellipse cx="166" cy="652" rx="7" ry="2" fill="#262c36" opacity="0.6"/>
<ellipse cx="132" cy="622" rx="10" ry="2" fill="#262c36" opacity="0.6"/>
<ellipse cx="46" cy="619" rx="5" ry="2" fill="#262c36" opacity="0.6"/>
<ellipse cx="153" cy="580" rx="4" ry="2" fill="#262c36" opacity="0.6"/>
<ellipse cx="95" cy="633" rx="6" ry="1" fill="#262c36" opacity="0.6"/>
<ellipse cx="166" cy="656" rx="4" ry="2" fill="#262c36" opacity="0.6"/>
<ellipse cx="147" cy="628" rx="7" ry="2" fill="#262c36" opacity="0.6"/>
<ellipse cx="237" cy="648" rx="6" ry="3" fill="#262c36" opacity="0.6"/>
<ellipse cx="160" cy="643" rx="10" ry="1" fill="#262c36" opacity="0.6"/>
<ellipse cx="51" cy="598" rx="9" ry="3" fill="#262c36" opacity="0.6"/>
<ellipse cx="54" cy="618" rx="9" ry="2" fill="#262c36" opacity="0.6"/>
<ellipse cx="141" cy="650" rx="9" ry="1" fill="#262c36" opacity="0.6"/>
<ellipse cx="232" cy="603" rx="7" ry="3" fill="#262c36" opacity="0.6"/>
<ellipse cx="71" cy="604" rx="9" ry="3" fill="#262c36" opacity="0.6"/>
<ellipse cx="234" cy="587" rx="7" ry="2" fill="#262c36" opacity="0.6"/>
<ellipse cx="230" cy="637" rx="5" ry="1" fill="#262c36" opacity="0.6"/>
<ellipse cx="42" cy="600" rx="7" ry="2" fill="#262c36" opacity="0.6"/>
</g>
<g opacity="0.6" fill="none" stroke="#c8cdd2" stroke-width="1.1"><circle cx="448.5" cy="642.5" r="4.6"/><line x1="442" y1="650" x2="455" y2="635"/></g>
<text x="457" y="647" font-family="Liberation Sans" font-size="11.5" fill="#c0c5ca" opacity="0.6">Grok</text>
</svg></div>

<!-- engagement -->
<svg class="a" style="left:860px;top:1062px" width="20" height="20" viewBox="0 0 20 20">
  <defs><radialGradient id="bub2" cx="0.45" cy="0.35" r="0.7"><stop offset="0" stop-color="#fff"/><stop offset="0.75" stop-color="#f2f2f2"/><stop offset="1" stop-color="#bdbdbd"/></radialGradient></defs>
  <path d="M4 13 L2.6 18.2 L8.4 15 Z" fill="#b5b5b5"/>
  <ellipse cx="10" cy="8.6" rx="7.8" ry="6.4" fill="url(#bub2)"/>
  <rect x="6" y="8" width="1.7" height="1.5" fill="#555"/><rect x="9.2" y="8" width="1.7" height="1.5" fill="#555"/><rect x="12.4" y="8" width="1.7" height="1.5" fill="#555"/>
</svg>
<div class="a gray" style="left:888px;top:1065px;line-height:16px;font-size:13.5px;letter-spacing:0.25px">567</div>
<svg class="a" style="left:951px;top:1062px" width="20" height="20" viewBox="0 0 20 20">
  <defs><linearGradient id="rtg" x1="0" y1="0" x2="0" y2="1"><stop offset="0" stop-color="#8fa8c8"/><stop offset="1" stop-color="#5b7aa3"/></linearGradient></defs>
  <rect x="2" y="2" width="15.5" height="16" rx="2.5" fill="url(#rtg)"/>
  <path d="M5 10 V8.2 a2 2 0 0 1 2 -2 H12.6" fill="none" stroke="#fff" stroke-width="1.5"/>
  <path d="M12 4.2 L14.6 6.2 L12 8.2 Z" fill="#fff"/>
  <path d="M14.5 10 V11.8 a2 2 0 0 1 -2 2 H6.9" fill="none" stroke="#fff" stroke-width="1.5"/>
  <path d="M7.5 11.8 L4.9 13.8 L7.5 15.8 Z" fill="#fff"/>
</svg>
<div class="a gray" style="left:979px;top:1065px;line-height:16px;font-size:13.5px;letter-spacing:0.25px">1,234</div>
<svg class="a" style="left:1052px;top:1062px" width="20" height="20" viewBox="0 0 20 20">
  <path d="M10 17.6 C5 13.6 1.8 10.8 1.8 7 C1.8 4.4 3.7 2.6 6 2.6 C7.8 2.6 9.2 3.6 10 5 C10.8 3.6 12.2 2.6 14 2.6 C16.3 2.6 18.2 4.4 18.2 7 C18.2 10.8 15 13.6 10 17.6 Z" fill="#e8402c"/>
  <ellipse cx="6" cy="6" rx="2" ry="1.3" fill="#f47a68" opacity="0.6"/>
</svg>
<div class="a gray" style="left:1079px;top:1065px;line-height:16px;font-size:13.5px;letter-spacing:0.25px">4,567</div>
<svg class="a" style="left:1153px;top:1062px" width="20" height="20" viewBox="0 0 20 20">
  <path d="M1.6 10 Q10 2.4 18.4 10 Q10 17.6 1.6 10 Z" fill="#f4f4f4"/>
  <circle cx="10" cy="10" r="4.4" fill="#8b6420"/>
  <circle cx="10" cy="10" r="2.2" fill="#141414"/>
  <circle cx="11.2" cy="8.8" r="0.8" fill="#fff"/>
</svg>
<div class="a gray" style="left:1180px;top:1065px;line-height:16px;font-size:13.5px;letter-spacing:0.25px">56,000</div>
<div class="a" style="left:1295px;top:1066px;width:57px;height:18px;border-radius:4px;background:#1a1409;border:1px solid #3e2d13;color:#cfa532;font-size:11px;font-weight:700;line-height:16px;text-align:center">Bot 82%</div>
<div class="a" style="left:785px;top:1092px;width:583px;height:1px;background:#2f3336"></div>

<!-- tweet 2 -->
<div class="a" style="left:801px;top:1105px;width:48px;height:48px;border-radius:50%;background:linear-gradient(135deg,#4f95e6,#3f7bc6);color:#fff;font-size:18px;font-weight:700;text-align:center;line-height:52px">M</div>
<div class="a tw" style="left:861px;top:1111.5px;line-height:20px;font-size:16px;font-weight:700;white-space:nowrap">Anna from Vienna</div>
<svg class="a" style="left:1002px;top:1111px" width="24" height="20" viewBox="0 0 24 20">
  <ellipse cx="11" cy="15.4" rx="9.6" ry="2.6" fill="#d8d8d8"/>
  <path d="M4 8 H17 V12 Q17 16 10.5 16 Q4 16 4 12 Z" fill="#efefef"/>
  <ellipse cx="10.5" cy="8.2" rx="6.5" ry="1.6" fill="#3a2416"/>
  <path d="M17 9.2 Q20.4 9.4 19.6 12 Q18.8 13.6 16.6 13.4" fill="none" stroke="#e0e0e0" stroke-width="1.3"/>
  <path d="M10 1.5 Q8.8 3 10.2 4.5 Q11.2 5.6 10 6.6" fill="none" stroke="#555" stroke-width="0.6"/>
</svg>
<div class="a gray" style="left:861px;top:1130px;line-height:18px;font-size:14px;white-space:nowrap">@MorningCoffee_Wien · Mar 15, 14:00</div>

<!-- column scrollbar -->
<div class="a" style="left:1368px;top:246px;width:15px;height:895px;background:#fafafa"></div>
<div class="a" style="left:1372px;top:648px;width:7px;height:127px;border-radius:4px;background:#c1c1c1"></div>
<!-- bottom clip: main bg below panel -->
<div class="a" style="left:361px;top:1141px;width:1446px;height:22px;background:#f3f3f6"></div>

</div></body></html>
